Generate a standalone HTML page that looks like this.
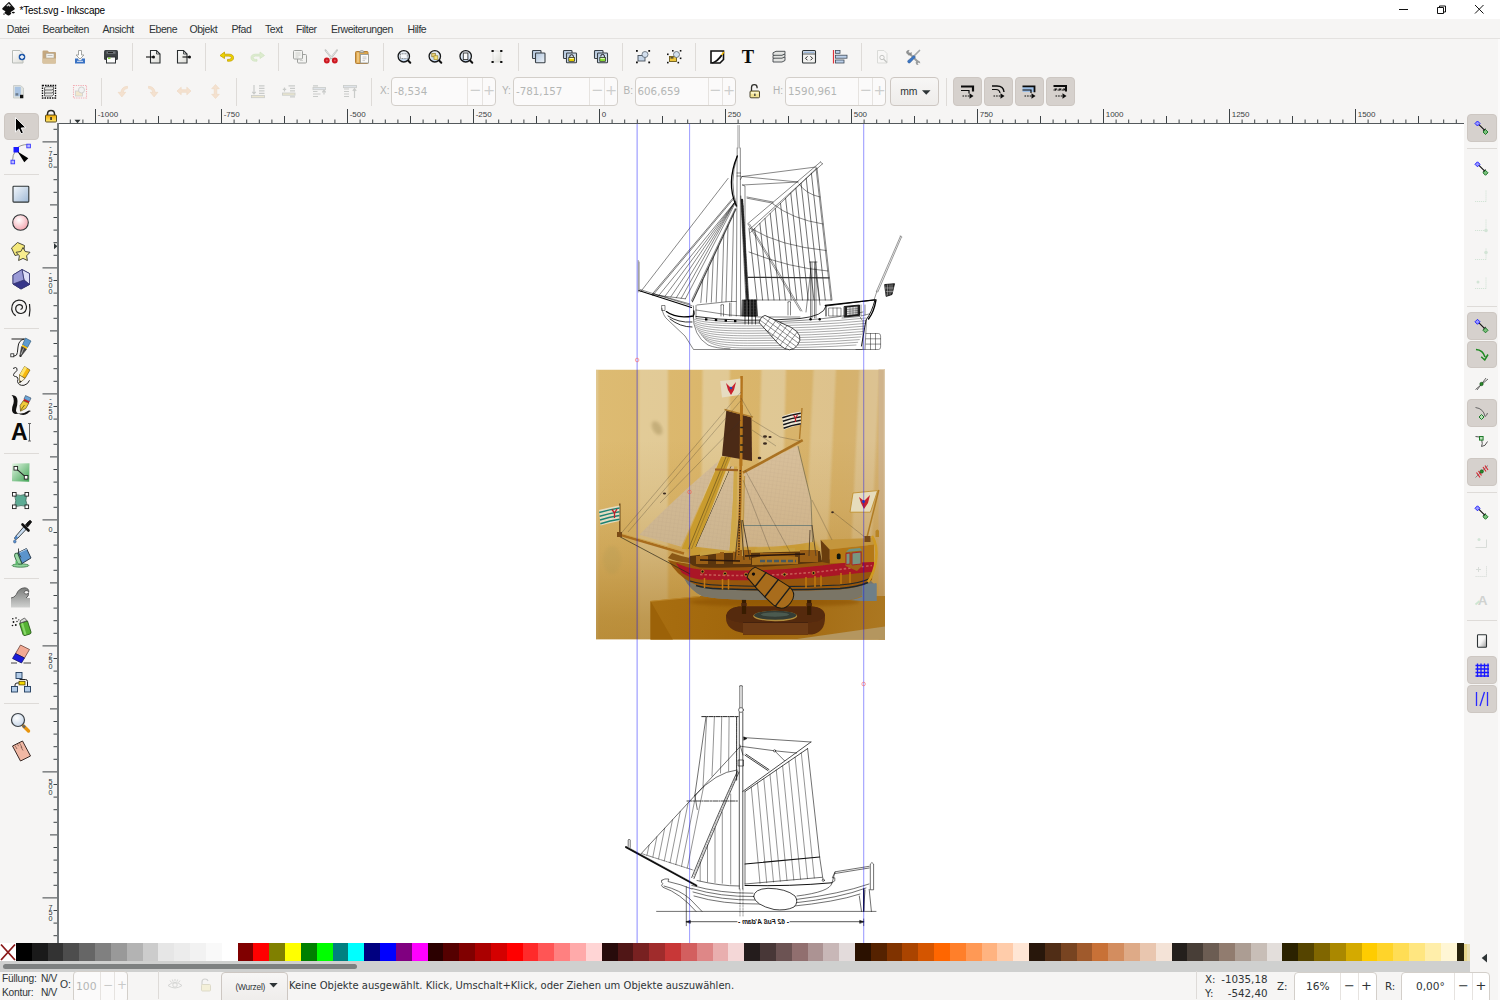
<!DOCTYPE html>
<html lang="de">
<head>
<meta charset="utf-8">
<title>*Test.svg - Inkscape</title>
<style>
html,body{margin:0;padding:0;}
body{width:1500px;height:1000px;overflow:hidden;background:#f6f5f4;position:relative;font-family:"Liberation Sans",sans-serif;color:#2e3436;}
.abs{position:absolute;}
#title{left:0;top:0;width:1500px;height:19px;background:#fff;}
#title .t{position:absolute;left:19.5px;top:3.5px;font-size:10px;line-height:13px;color:#000;white-space:nowrap;letter-spacing:-0.2px;}
#menu{left:0;top:19px;width:1500px;height:19px;background:#f6f5f4;border-bottom:1px solid #e4e2e0;}
#menu span{position:absolute;top:3.5px;font-size:10.5px;line-height:13px;color:#2e3436;white-space:nowrap;letter-spacing:-0.45px;}
.sep{position:absolute;width:1px;background:#dedbd8;}
.ic{position:absolute;width:16px;height:16px;overflow:visible;}
.tog{position:absolute;box-sizing:border-box;background:#d6d1cd;border:1px solid #cdc7c2;border-radius:4px;}
.field{position:absolute;box-sizing:border-box;border:1px solid #d3cfca;border-radius:4px;background:#fbfafa;}
.field i{position:absolute;top:0;bottom:0;width:1px;background:#e6e3e0;}
.field b{position:absolute;font-weight:normal;font-family:"DejaVu Sans",sans-serif;color:#b4b6b5;}
.lab{position:absolute;font-size:10.5px;line-height:12px;white-space:nowrap;}
.dv{font-family:"DejaVu Sans","Liberation Sans",sans-serif;}
#canvas{left:58px;top:124px;width:1406px;height:819px;background:#fff;overflow:hidden;}
</style>
</head>
<body>
<div id="title" class="abs"><span class="t">*Test.svg - Inkscape</span></div>
<div id="menu" class="abs">
<span style="left:6.8px">Datei</span><span style="left:42.5px">Bearbeiten</span><span style="left:102.5px">Ansicht</span><span style="left:149px">Ebene</span><span style="left:189.5px">Objekt</span><span style="left:231.5px">Pfad</span><span style="left:265px">Text</span><span style="left:296px">Filter</span><span style="left:331px">Erweiterungen</span><span style="left:407.5px">Hilfe</span>
</div>
<!-- toolbar separators -->
<div class="sep" style="left:132px;top:43px;height:28px"></div>
<div class="sep" style="left:205px;top:43px;height:28px"></div>
<div class="sep" style="left:278px;top:43px;height:28px"></div>
<div class="sep" style="left:383px;top:43px;height:28px"></div>
<div class="sep" style="left:518px;top:43px;height:28px"></div>
<div class="sep" style="left:622px;top:43px;height:28px"></div>
<div class="sep" style="left:695px;top:43px;height:28px"></div>
<div class="sep" style="left:861px;top:43px;height:28px"></div>
<div class="sep" style="left:101px;top:78px;height:28px"></div>
<div class="sep" style="left:236px;top:78px;height:28px"></div>
<div class="sep" style="left:371px;top:78px;height:28px"></div>
<div class="sep" style="left:946px;top:78px;height:28px"></div>
<!-- toggled buttons row 2 -->
<div class="tog" style="left:952.5px;top:77px;width:29.5px;height:28.5px"></div>
<div class="tog" style="left:983.5px;top:77px;width:29.5px;height:28.5px"></div>
<div class="tog" style="left:1014.5px;top:77px;width:29.5px;height:28.5px"></div>
<div class="tog" style="left:1045.5px;top:77px;width:29.5px;height:28.5px"></div>
<!-- numeric fields -->
<span class="lab" style="left:380px;top:85px;color:#b0b2b1;font-size:10px">X:</span>
<div class="field" style="left:390.5px;top:77px;width:105px;height:28.5px"><b style="left:2.5px;top:7px;font-size:10.3px;line-height:13px">-8,534</b><i style="left:75.5px"></i><i style="left:90px"></i><b style="left:77.5px;top:5.5px;font-size:14.5px;line-height:13px;color:#cdcecd">−</b><b style="left:91.5px;top:5.5px;font-size:14.5px;line-height:13px;color:#cdcecd">+</b></div>
<span class="lab" style="left:502px;top:85px;color:#b0b2b1;font-size:10px">Y:</span>
<div class="field" style="left:512.5px;top:77px;width:105px;height:28.5px"><b style="left:2.5px;top:7px;font-size:10.3px;line-height:13px">-781,157</b><i style="left:75.5px"></i><i style="left:90px"></i><b style="left:77.5px;top:5.5px;font-size:14.5px;line-height:13px;color:#cdcecd">−</b><b style="left:91.5px;top:5.5px;font-size:14.5px;line-height:13px;color:#cdcecd">+</b></div>
<span class="lab" style="left:623.5px;top:85px;color:#b0b2b1;font-size:10px">B:</span>
<div class="field" style="left:634.5px;top:77px;width:101px;height:28.5px"><b style="left:2px;top:7px;font-size:10.3px;line-height:13px">606,659</b><i style="left:72px"></i><i style="left:86px"></i><b style="left:73.5px;top:5.5px;font-size:14.5px;line-height:13px;color:#cdcecd">−</b><b style="left:87.5px;top:5.5px;font-size:14.5px;line-height:13px;color:#cdcecd">+</b></div>
<span class="lab" style="left:773px;top:85px;color:#b0b2b1;font-size:10px">H:</span>
<div class="field" style="left:785px;top:77px;width:101px;height:28.5px"><b style="left:2px;top:7px;font-size:10.3px;line-height:13px">1590,961</b><i style="left:72px"></i><i style="left:86px"></i><b style="left:73.5px;top:5.5px;font-size:14.5px;line-height:13px;color:#cdcecd">−</b><b style="left:87.5px;top:5.5px;font-size:14.5px;line-height:13px;color:#cdcecd">+</b></div>
<div class="field" style="left:890.2px;top:77px;width:49px;height:28.5px;background:linear-gradient(#f7f6f5,#eeecea);border-color:#cdc7c2"><b style="left:9px;top:7px;font-size:10.4px;line-height:13px;color:#2e3436;font-family:'Liberation Sans',sans-serif">mm</b></div>
<svg class="abs" style="left:0;top:0" width="1500" height="110" viewBox="0 0 1500 110">
<defs>
<linearGradient id="gpage" x1="0" y1="0" x2="1" y2="1"><stop offset="0" stop-color="#fff"/><stop offset="1" stop-color="#dcdcd6"/></linearGradient>
<linearGradient id="gblue" x1="0" y1="0" x2="1" y2="1"><stop offset="0" stop-color="#aec3dc"/><stop offset="1" stop-color="#eef3f8"/></linearGradient>
<radialGradient id="glens" cx="0.5" cy="0.7" r="0.7"><stop offset="0" stop-color="#bcd3ee"/><stop offset="1" stop-color="#f4f6f8"/></radialGradient>
</defs>
<!-- inkscape logo -->
<g transform="translate(2,2)"><path d="M6.5 0.3 L0.4 6.3 Q-0.2 7.2 0.8 7.8 L3 9 Q4 9.6 2.8 10.2 Q1.8 10.8 3 11.4 L5.6 13.3 Q6.5 13.9 7.4 13.3 L9 12 Q9.6 11.4 8.8 10.8 Q8 10 9.4 9.4 L12.2 7.8 Q13.2 7.2 12.6 6.3 L7.5 0.3 Q7 -0.1 6.5 0.3 Z" fill="#111"/><path d="M6.6 1.4 L4.2 3.9 L5.5 4.6 L6.3 3.6 L7.2 4.8 L8.3 4 L9.6 4.4 Z" fill="#fff" opacity=".85"/><ellipse cx="11.3" cy="10.6" rx="1.6" ry=".8" fill="#111"/><ellipse cx="2" cy="12" rx="1" ry=".5" fill="#111"/></g>
<!-- window controls -->
<g stroke="#111" stroke-width="1" fill="none"><path d="M1399 9.5h9"/><path d="M1437.5 7.5h6v6h-6zM1439.500 7.500v-1.500h6v6h-2"/><path d="M1475 5l8.500 8.500M1483.500 5l-8.500 8.500"/></g>

<!-- ROW 1 -->
<!-- new -->
<g><path d="M12.500 50.500h7.500l3 3v9.500h-10.500z" fill="url(#gpage)" stroke="#b9bdb8" stroke-width="1"/><circle cx="22" cy="57" r="3.300" fill="#1f57a8"/><path d="M20 57h4M22 55v4" stroke="#fff" stroke-width="1.300"/></g>
<!-- open -->
<g><path d="M42.500 51.500q0-1 1-1h4l1.500 1.500h6q1 0 1 1v9.500q0 1-1 1h-11.500q-1 0-1-1z" fill="#c4a77f"/><rect x="46" y="53.500" width="8" height="4.500" fill="#f2f2ef" stroke="#b0a692" stroke-width=".6"/><path d="M47.500 55.500h5" stroke="#aaa" stroke-width=".7"/><path d="M42.500 58.500h13.500v4q0 1-1 1h-11.500q-1 0-1-1z" fill="#d9c3a0"/></g>
<!-- save -->
<g><path d="M78.500 50.500h3v4.500h2.500l-4 4-4-4h2.500z" fill="#fff" stroke="#9a9c98" stroke-width=".9"/><path d="M75 58.500h3l.8 1.800h2.400l.8-1.800h3v5h-10z" fill="#3a73c4"/><rect x="77" y="60.800" width="6" height="1" fill="#dfe8f5"/></g>
<!-- print -->
<g><path d="M105.500 50h11q1.500 0 1.500 1.500v7q0 1.500-1.500 1.500h-11q-1.500 0-1.500-1.500v-7q0-1.500 1.500-1.500z" fill="#3e4245"/><rect x="106.500" y="51.300" width="9" height="2.500" fill="#70757a"/><path d="M108 52.500h5" stroke="#222" stroke-width="1"/><rect x="106.500" y="57" width="9" height="6" fill="#fdfdfd" stroke="#2e3234" stroke-width="1"/><rect x="108" y="57.600" width="2.500" height="1.200" fill="#73d216"/></g>
<!-- import -->
<g><path d="M150.500 50.500h6l3.500 3.500v9h-9.500z" fill="url(#gpage)" stroke="#2a2e30" stroke-width="1.100"/><path d="M156.500 50.500v3.500h3.500" fill="none" stroke="#2a2e30" stroke-width=".8"/><path d="M146 57h7" stroke="#111" stroke-width="1.100"/><circle cx="153.500" cy="57" r="1.500" fill="#111"/></g>
<!-- export -->
<g><path d="M177.500 50.500h6l3.500 3.500v9h-9.500z" fill="url(#gpage)" stroke="#2a2e30" stroke-width="1.100"/><path d="M183.500 50.500v3.500h3.500" fill="none" stroke="#2a2e30" stroke-width=".8"/><path d="M182.500 57h7" stroke="#111" stroke-width="1.100"/><circle cx="189.500" cy="57" r="1.500" fill="#111"/></g>
<!-- undo -->
<g><path d="M220 55.500l4.500-3.500v2.200h4.500q4.500 0 4.500 3.600q0 3.400-4.500 3.400h-1.500v-1.800h1.500q2.300 0 2.300-1.700q0-1.600-2.300-1.600h-4.500v2.400z" fill="#edd400" stroke="#c4a000" stroke-width=".8" stroke-linejoin="round"/></g>
<!-- redo -->
<g opacity=".55"><path d="M264.500 55.500l-4.500-3.500v2.200h-4.500q-4.500 0-4.500 3.600q0 3.400 4.500 3.400h1.500v-1.800h-1.500q-2.300 0-2.300-1.700q0-1.600 2.300-1.600h4.500v2.400z" fill="#c8e4b0" stroke="#b4d69a" stroke-width=".8" stroke-linejoin="round"/></g>
<!-- copy -->
<g fill="#f3f3f1" stroke="#9fa19e" stroke-width="1"><rect x="297.500" y="54.500" width="9" height="8.500" rx="1"/><rect x="293.500" y="50.500" width="9" height="8.500" rx="1"/><path d="M295.500 53h5M295.500 55h5M295.500 57h3M300 60.500h3" stroke="#c5c6c4" stroke-width=".8"/></g>
<!-- cut -->
<g><path d="M325.500 50.200l6.500 8.300M337 50.200l-6.500 8.300" stroke="#b9bcb8" stroke-width="1.800" stroke-linecap="round"/><path d="M325.800 50.500l6 7.500M336.700 50.500l-6 7.500" stroke="#f2f2f2" stroke-width=".7"/><circle cx="326.800" cy="60.500" r="2.900" fill="#cc1820"/><circle cx="334.800" cy="60.500" r="2.900" fill="#cc1820"/><circle cx="326.800" cy="60.500" r="1" fill="#e35a60"/><circle cx="334.800" cy="60.500" r="1" fill="#e35a60"/></g>
<!-- paste -->
<g><rect x="355.500" y="51.500" width="12.500" height="12" rx="1" fill="#dba64e" stroke="#b47f36" stroke-width="1"/><rect x="357" y="52.500" width="2" height="10" fill="#efc57c"/><path d="M359.500 52.500q0-2 2.300-2q2.300 0 2.300 2z" fill="#d3d5d1" stroke="#8a8c88" stroke-width=".7"/><rect x="360.500" y="54.500" width="8" height="8.500" fill="#fbfbfa" stroke="#9a9c98" stroke-width=".9"/><path d="M362.500 57h4M362.500 58.800h4M362.500 60.600h2.500" stroke="#bbb" stroke-width=".8"/></g>
<!-- zoom icons -->
<g><circle cx="403.800" cy="56.300" r="5.700" fill="url(#glens)" stroke="#16181a" stroke-width="1.300"/><path d="M408.300 60.800l2 2" stroke="#111" stroke-width="2" stroke-linecap="round"/><rect x="400.300" y="53.800" width="7" height="4.800" fill="#f6f8fa" stroke="#555" stroke-width=".7" stroke-dasharray="1 .6"/></g>
<g><circle cx="434.800" cy="56.300" r="5.700" fill="url(#glens)" stroke="#16181a" stroke-width="1.300"/><path d="M439.300 60.800l2 2" stroke="#111" stroke-width="2" stroke-linecap="round"/><rect x="431.800" y="53.300" width="3.500" height="3.500" fill="#e9d27c" stroke="#8a7526" stroke-width=".7"/><rect x="434" y="55.800" width="3.800" height="3.800" fill="#f7e27a" stroke="#a08a2c" stroke-width=".7"/></g>
<g><circle cx="465.700" cy="56.300" r="5.700" fill="url(#glens)" stroke="#16181a" stroke-width="1.300"/><path d="M470.300 60.800l2 2" stroke="#111" stroke-width="2" stroke-linecap="round"/><rect x="463.300" y="53" width="4.600" height="6.600" fill="#fafafa" stroke="#333" stroke-width=".9"/></g>
<g><rect x="493" y="51" width="8" height="11" fill="url(#gpage)" stroke="#d0d0cc" stroke-width=".6"/><g fill="#111"><rect x="491.500" y="50" width="2.200" height="2"/><rect x="500.200" y="50" width="2.200" height="2"/><rect x="491.500" y="61" width="2.200" height="2"/><rect x="500.200" y="61" width="2.200" height="2"/></g></g>
<!-- duplicate -->
<g fill="url(#gblue)" stroke="#394047" stroke-width="1.100"><rect x="532.500" y="50.500" width="8.500" height="8" rx=".8"/><rect x="535.500" y="53" width="9.500" height="9.800" rx=".8"/></g>
<!-- clone -->
<g><g fill="url(#gblue)" stroke="#394047" stroke-width="1.100"><rect x="563.500" y="50.500" width="8.500" height="8" rx=".8"/><rect x="566.500" y="53" width="10" height="9.800" rx=".8"/></g><path d="M569.800 57.500v-1.200q0-1.600 1.800-1.600q1.800 0 1.800 1.600v1.200" fill="none" stroke="#222" stroke-width="1"/><rect x="568.800" y="57.500" width="5.600" height="3.800" fill="#edd400" stroke="#222" stroke-width=".7"/><rect x="569.500" y="58" width="4.200" height="1" fill="#fff6a8"/></g>
<!-- unlink clone -->
<g><g fill="url(#gblue)" stroke="#394047" stroke-width="1.100"><rect x="594.500" y="50.500" width="8.500" height="8" rx=".8"/><rect x="597.500" y="53" width="10" height="9.800" rx=".8"/></g><path d="M600.800 56.500v-.5q0-1.600 1.800-1.600q1.800 0 1.800 1.600v1.500" fill="none" stroke="#222" stroke-width="1"/><rect x="599.800" y="57.500" width="5.600" height="3.800" fill="#8ae234" stroke="#222" stroke-width=".7"/><rect x="600.500" y="58" width="4.200" height="1" fill="#d9f7b0"/></g>
<!-- group -->
<g><rect x="638" y="55.500" width="7" height="5.500" fill="#c5d5e8" stroke="#47505a" stroke-width=".9"/><circle cx="645" cy="54.500" r="3" fill="#d3e0ef" stroke="#5a6470" stroke-width=".8"/><g fill="#111"><rect x="636" y="50" width="1.800" height="1.800"/><rect x="648.300" y="50" width="1.800" height="1.800"/><rect x="636" y="61.500" width="1.800" height="1.800"/><rect x="648.300" y="61.500" width="1.800" height="1.800"/></g></g>
<!-- ungroup -->
<g><rect x="669.500" y="56.500" width="7" height="5" fill="#edc63c" stroke="#6a5a1a" stroke-width=".9"/><rect x="670.500" y="57.200" width="3" height="1.300" fill="#333"/><circle cx="676.500" cy="54.500" r="3" fill="#d3e0ef" stroke="#5a6470" stroke-width=".8"/><g fill="#111"><rect x="667" y="53.500" width="1.600" height="1.600"/><rect x="667" y="61.800" width="1.600" height="1.600"/><rect x="677.500" y="61.800" width="1.600" height="1.600"/><rect x="672" y="50" width="1.600" height="1.600"/><rect x="679.800" y="50" width="1.600" height="1.600"/><rect x="679.800" y="57.500" width="1.600" height="1.600"/></g></g>
<!-- fill & stroke -->
<g><path d="M711 51h12.500v8.500l-3.500 3.500h-9z" fill="#fff" stroke="#111" stroke-width="1.600"/><path d="M711.500 62.500q5-1.500 9.500-8l1.500 1q-4 6.500-10 8z" fill="#111"/><path d="M721 54.500l2.500-3l1 .8l-2 3z" fill="#f5b800"/></g>
<!-- T -->
<text x="747.800" y="63" font-family="Liberation Serif, serif" font-weight="bold" font-size="18.500" text-anchor="middle" fill="#0a0a0a">T</text>
<!-- layers -->
<g fill="#e3e4e2" stroke="#41464a" stroke-width=".9" stroke-linejoin="round"><path d="M773 58.500l3-1.500h9v3.500l-3 1.500h-9z"/><path d="M773 55.700l3-1.500h9v2.500l-3 1.500h-9z"/><path d="M773 52.800l3-1.500h9v2.500l-3 1.500h-9z"/></g>
<!-- xml editor -->
<g><rect x="802.500" y="50.500" width="13" height="12.500" rx="1" fill="#f4f4f2" stroke="#2e3436" stroke-width="1.100"/><rect x="803.500" y="51.500" width="11" height="1.600" fill="#9db8da"/><path d="M803 54h12" stroke="#2e3436" stroke-width=".8"/><path d="M807.500 56.300l-2 2l2 2M810.500 56.300l2 2l-2 2" fill="none" stroke="#222" stroke-width="1"/></g>
<!-- align -->
<g><path d="M833.500 50v13.500" stroke="#e0343c" stroke-width="1.200"/><g fill="#bcd0ea" stroke="#3e4a58" stroke-width=".8"><rect x="835.500" y="50.500" width="4.500" height="2.800"/><rect x="835.500" y="55.200" width="11.500" height="3"/><rect x="835.500" y="60" width="8.500" height="3"/></g></g>
<!-- doc props faded -->
<g opacity=".45"><path d="M877.500 50.500h6.500l3 3v9.500h-9.500z" fill="#fbfbfa" stroke="#b9bdb8" stroke-width="1"/><circle cx="882" cy="57.500" r="2.200" fill="none" stroke="#8a8c88" stroke-width="1"/><path d="M883.500 59l3.500 3.500" stroke="#8a8c88" stroke-width="1.300"/></g>
<!-- prefs -->
<g><path d="M909.500 53.500l8 8" stroke="#9a9d9e" stroke-width="2" stroke-linecap="round"/><path d="M906.500 53.200q-.6-2.800 2.700-3l-1 1.800l1.500 1.500l1.800-1q.2 3.200-3 2.700" fill="#8f9293" stroke="#777" stroke-width=".4"/><path d="M917 60.500q3.500 0 3.200 3l-1.600-1l-1 1l1 1.500q-2.800.5-3-2.500" fill="#9a9d9e"/><path d="M919.500 50.500l-5.500 5.500" stroke="#a5a8a9" stroke-width="1.700" stroke-linecap="round"/><path d="M914 55.500l1.500 1.500l-5.200 5.600q-1.200 1-2.200 0t0-2.200z" fill="#3b76c4" stroke="#24508c" stroke-width=".5"/></g>

<!-- ROW 2 -->
<!-- select all -->
<g><path d="M13.500 85.500h7l3 2.500v10h-10z" fill="#dfe3e0" stroke="#c4c8c4" stroke-width=".8"/><rect x="14.800" y="86.800" width="6" height="9.500" fill="#a9c3e2"/><rect x="15.500" y="93.200" width="2.800" height="2.400" fill="#6d7c8c"/><rect x="20" y="94.800" width="3.200" height="3.400" fill="#111"/></g>
<!-- select all layers -->
<g><rect x="42.500" y="85.500" width="13" height="12.500" fill="#fff" stroke="#111" stroke-width="1.400" stroke-dasharray="1.600 .9"/><g fill="#e8e8e6" stroke="#333" stroke-width=".7"><path d="M44.500 93.500l1.500-1h7.500v2.500l-1.500 1h-7.500z"/><path d="M44.500 90.500l1.500-1h7.500v2.500l-1.500 1h-7.500z"/><path d="M44.500 87.700l1.500-1h7.500v2.300l-1.500 1h-7.500z"/></g></g>
<!-- deselect -->
<g opacity=".5"><rect x="73.500" y="85.500" width="13" height="12.500" fill="none" stroke="#ef6a78" stroke-width="1.100" stroke-dasharray="1.300 1"/><rect x="75.500" y="91" width="7" height="5" fill="#f0dca8" stroke="#aaa" stroke-width=".8"/><circle cx="81.500" cy="90" r="3" fill="#eef0f2" stroke="#999" stroke-width=".8"/></g>
<!-- rotate ccw / cw / flips faded -->
<g fill="#f4e1cf" stroke="#efd6bf" stroke-width=".6" stroke-linejoin="round">
<path d="M127.500 86.300q-6 .3-6.600 6h-2.800l3.800 4.600l3.800-4.600h-2.600q.5-3.500 4.400-4z"/>
<path d="M148.500 86.300q6 .3 6.600 6h2.800l-3.800 4.600l-3.800-4.600h2.600q-.5-3.500-4.400-4z"/>
<path d="M177 91l4.200-3.800v2.500h5.600v-2.500l4.200 3.800l-4.200 3.800v-2.500h-5.600v2.500z"/>
<path d="M215.500 84.500l3.800 4.200h-2.500v5.600h2.500l-3.800 4.200l-3.800-4.200h2.500v-5.600h-2.500z"/>
</g>
<!-- lower/raise faded -->
<g stroke="#c9cbc9" stroke-width="1.200" fill="none">
<path d="M259 85.800h5.500M259 88.300h5.500M259 90.800h5.500M259 93.300h5.500M254 85v8.500M252.300 91.800l1.700 2l1.700-2"/>
<path d="M288.500 85.800h6.500M290 88.300h5M290 90.800h5M290 96.800h5M284.500 87.500v4M282.800 89.300h3.400"/>
<path d="M313 85.800h5M313 91.500h4.500M313 94h7.500M313 96.500h5M324 90.500v4M322.300 92.300l1.700-2l1.700 2"/>
<path d="M344 89h5M344 91.500h5M344 94h5M344 96.500h5M354.500 89v9M352.800 90.800l1.700-2l1.700 2"/>
</g>
<g fill="#ece6cf" stroke="#c9cbc9" stroke-width=".8"><rect x="251.500" y="95.500" width="13" height="2.200"/><rect x="282.500" y="93" width="12.500" height="2.200"/></g>
<g fill="#dfe3e8" stroke="#c9cbc9" stroke-width=".8"><rect x="313" y="87.500" width="12.500" height="2.200"/><rect x="343.500" y="85.500" width="13" height="2.200"/></g>
<!-- lock -->
<g><path d="M751.500 91.500v-4q0-2.800 2.800-2.800q2.800 0 2.800 2.800v.8" fill="none" stroke="#2e2e2a" stroke-width="1.300"/><rect x="750" y="91" width="9.500" height="6.800" rx="1" fill="#f1e292" stroke="#3a3620" stroke-width=".9"/><rect x="751" y="92" width="7.500" height="1.800" fill="#fbf5c8"/><rect x="754.200" y="93.600" width="1.300" height="2.400" fill="#333"/></g>
<!-- mm arrow -->
<path d="M922 90.300h8.500l-4.250 4.400z" fill="#2e3436"/>
<!-- snap-bbox toggles row2 -->
<g stroke="#0c0c0c" fill="none">
<path d="M961 86.500h12v5" stroke-width="2.200"/><path d="M961 90.500h8v3" stroke-width="1.200"/><path d="M962.500 96h8" stroke-width="1.200" stroke-dasharray="1.600 1"/><path d="M969.500 93.300l4 2.700l-4 2.700z" fill="#0c0c0c" stroke="none"/>
<path d="M992 86h5q6.500 0 7 6" stroke-width="1.400"/><path d="M992 89.500h4q3.500 0 4 3.500" stroke-width="1.200"/><path d="M993.500 96h8" stroke-width="1.200" stroke-dasharray="1.600 1"/><path d="M1000.500 93.300l4 2.700l-4 2.700z" fill="#0c0c0c" stroke="none"/>
<rect x="1022.500" y="86.500" width="11.500" height="5.500" fill="#9dbfe6" stroke="none"/><path d="M1022.500 86.300h12v6" stroke-width="1.800"/><path d="M1022.500 90h8.500v3" stroke-width="1.200"/><path d="M1024.500 96h8" stroke-width="1.200" stroke-dasharray="1.600 1"/><path d="M1031.500 93.300l4 2.700l-4 2.700z" fill="#0c0c0c" stroke="none"/>
<path d="M1053.500 86h12.500v5.500" stroke-width="2"/><path d="M1053.500 90h12" stroke-width="1.200" stroke-dasharray="2.600 1.400"/><path d="M1055.500 96h8" stroke-width="1.200" stroke-dasharray="1.600 1"/><path d="M1062.500 93.300l4 2.700l-4 2.700z" fill="#0c0c0c" stroke="none"/>
</g>
<g fill="#0c0c0c"><path d="M1054.300 88.500h3l-1.500 2.300zM1058.600 88.500h3l-1.500 2.300zM1062.900 88.500h3l-1.500 2.300z"/></g>
</svg>
<svg class="abs" style="left:0;top:0" width="1500" height="1000" viewBox="0 0 1500 1000"><g stroke="#3d4346" stroke-width="1" fill="none"><path d="M70.3 119.5V123.5"/><path d="M82.9 119.5V123.5"/><path d="M95.5 109V123.5"/><path d="M108.1 119.5V123.5"/><path d="M120.7 119.5V123.5"/><path d="M133.3 119.5V123.5"/><path d="M145.9 119.5V123.5"/><path d="M158.5 116V123.5"/><path d="M171.1 119.5V123.5"/><path d="M183.7 119.5V123.5"/><path d="M196.3 119.5V123.5"/><path d="M208.9 119.5V123.5"/><path d="M221.5 109V123.5"/><path d="M234.1 119.5V123.5"/><path d="M246.7 119.5V123.5"/><path d="M259.3 119.5V123.5"/><path d="M271.9 119.5V123.5"/><path d="M284.5 116V123.5"/><path d="M297.1 119.5V123.5"/><path d="M309.7 119.5V123.5"/><path d="M322.3 119.5V123.5"/><path d="M334.9 119.5V123.5"/><path d="M347.5 109V123.5"/><path d="M360.1 119.5V123.5"/><path d="M372.7 119.5V123.5"/><path d="M385.3 119.5V123.5"/><path d="M397.9 119.5V123.5"/><path d="M410.5 116V123.5"/><path d="M423.1 119.5V123.5"/><path d="M435.7 119.5V123.5"/><path d="M448.3 119.5V123.5"/><path d="M460.9 119.5V123.5"/><path d="M473.5 109V123.5"/><path d="M486.1 119.5V123.5"/><path d="M498.7 119.5V123.5"/><path d="M511.3 119.5V123.5"/><path d="M523.9 119.5V123.5"/><path d="M536.5 116V123.5"/><path d="M549.1 119.5V123.5"/><path d="M561.7 119.5V123.5"/><path d="M574.3 119.5V123.5"/><path d="M586.9 119.5V123.5"/><path d="M599.5 109V123.5"/><path d="M612.1 119.5V123.5"/><path d="M624.7 119.5V123.5"/><path d="M637.3 119.5V123.5"/><path d="M649.9 119.5V123.5"/><path d="M662.5 116V123.5"/><path d="M675.1 119.5V123.5"/><path d="M687.7 119.5V123.5"/><path d="M700.3 119.5V123.5"/><path d="M712.9 119.5V123.5"/><path d="M725.5 109V123.5"/><path d="M738.1 119.5V123.5"/><path d="M750.7 119.5V123.5"/><path d="M763.3 119.5V123.5"/><path d="M775.9 119.5V123.5"/><path d="M788.5 116V123.5"/><path d="M801.1 119.5V123.5"/><path d="M813.7 119.5V123.5"/><path d="M826.3 119.5V123.5"/><path d="M838.9 119.5V123.5"/><path d="M851.5 109V123.5"/><path d="M864.1 119.5V123.5"/><path d="M876.7 119.5V123.5"/><path d="M889.3 119.5V123.5"/><path d="M901.9 119.5V123.5"/><path d="M914.5 116V123.5"/><path d="M927.1 119.5V123.5"/><path d="M939.7 119.5V123.5"/><path d="M952.3 119.5V123.5"/><path d="M964.9 119.5V123.5"/><path d="M977.5 109V123.5"/><path d="M990.1 119.5V123.5"/><path d="M1002.7 119.5V123.5"/><path d="M1015.3 119.5V123.5"/><path d="M1027.9 119.5V123.5"/><path d="M1040.5 116V123.5"/><path d="M1053.1 119.5V123.5"/><path d="M1065.7 119.5V123.5"/><path d="M1078.3 119.5V123.5"/><path d="M1090.9 119.5V123.5"/><path d="M1103.5 109V123.5"/><path d="M1116.1 119.5V123.5"/><path d="M1128.7 119.5V123.5"/><path d="M1141.3 119.5V123.5"/><path d="M1153.9 119.5V123.5"/><path d="M1166.5 116V123.5"/><path d="M1179.1 119.5V123.5"/><path d="M1191.7 119.5V123.5"/><path d="M1204.3 119.5V123.5"/><path d="M1216.9 119.5V123.5"/><path d="M1229.5 109V123.5"/><path d="M1242.1 119.5V123.5"/><path d="M1254.7 119.5V123.5"/><path d="M1267.3 119.5V123.5"/><path d="M1279.9 119.5V123.5"/><path d="M1292.5 116V123.5"/><path d="M1305.1 119.5V123.5"/><path d="M1317.7 119.5V123.5"/><path d="M1330.3 119.5V123.5"/><path d="M1342.9 119.5V123.5"/><path d="M1355.5 109V123.5"/><path d="M1368.1 119.5V123.5"/><path d="M1380.7 119.5V123.5"/><path d="M1393.3 119.5V123.5"/><path d="M1405.9 119.5V123.5"/><path d="M1418.5 116V123.5"/><path d="M1431.1 119.5V123.5"/><path d="M1443.7 119.5V123.5"/><path d="M1456.3 119.5V123.5"/></g><g font-family="Liberation Sans, sans-serif" font-size="8" fill="#3a4043"><text x="97.7" y="117.2">-1000</text><text x="223.7" y="117.2">-750</text><text x="349.7" y="117.2">-500</text><text x="475.7" y="117.2">-250</text><text x="601.7" y="117.2">0</text><text x="727.7" y="117.2">250</text><text x="853.7" y="117.2">500</text><text x="979.7" y="117.2">750</text><text x="1105.7" y="117.2">1000</text><text x="1231.7" y="117.2">1250</text><text x="1357.7" y="117.2">1500</text></g><g stroke="#3d4346" stroke-width="1" fill="none"><path d="M53.5 129.3H57.5"/><path d="M42.5 141.9H57.5"/><path d="M53.5 154.5H57.5"/><path d="M53.5 167.1H57.5"/><path d="M53.5 179.7H57.5"/><path d="M53.5 192.3H57.5"/><path d="M50 204.9H57.5"/><path d="M53.5 217.5H57.5"/><path d="M53.5 230.1H57.5"/><path d="M53.5 242.7H57.5"/><path d="M53.5 255.3H57.5"/><path d="M42.5 267.9H57.5"/><path d="M53.5 280.5H57.5"/><path d="M53.5 293.1H57.5"/><path d="M53.5 305.7H57.5"/><path d="M53.5 318.3H57.5"/><path d="M50 330.9H57.5"/><path d="M53.5 343.5H57.5"/><path d="M53.5 356.1H57.5"/><path d="M53.5 368.7H57.5"/><path d="M53.5 381.3H57.5"/><path d="M42.5 393.9H57.5"/><path d="M53.5 406.5H57.5"/><path d="M53.5 419.1H57.5"/><path d="M53.5 431.7H57.5"/><path d="M53.5 444.3H57.5"/><path d="M50 456.9H57.5"/><path d="M53.5 469.5H57.5"/><path d="M53.5 482.1H57.5"/><path d="M53.5 494.7H57.5"/><path d="M53.5 507.3H57.5"/><path d="M42.5 519.9H57.5"/><path d="M53.5 532.5H57.5"/><path d="M53.5 545.1H57.5"/><path d="M53.5 557.7H57.5"/><path d="M53.5 570.3H57.5"/><path d="M50 582.9H57.5"/><path d="M53.5 595.5H57.5"/><path d="M53.5 608.1H57.5"/><path d="M53.5 620.7H57.5"/><path d="M53.5 633.3H57.5"/><path d="M42.5 645.9H57.5"/><path d="M53.5 658.5H57.5"/><path d="M53.5 671.1H57.5"/><path d="M53.5 683.7H57.5"/><path d="M53.5 696.3H57.5"/><path d="M50 708.9H57.5"/><path d="M53.5 721.5H57.5"/><path d="M53.5 734.1H57.5"/><path d="M53.5 746.7H57.5"/><path d="M53.5 759.3H57.5"/><path d="M42.5 771.9H57.5"/><path d="M53.5 784.5H57.5"/><path d="M53.5 797.1H57.5"/><path d="M53.5 809.7H57.5"/><path d="M53.5 822.3H57.5"/><path d="M50 834.9H57.5"/><path d="M53.5 847.5H57.5"/><path d="M53.5 860.1H57.5"/><path d="M53.5 872.7H57.5"/><path d="M53.5 885.3H57.5"/><path d="M42.5 897.9H57.5"/><path d="M53.5 910.5H57.5"/><path d="M53.5 923.1H57.5"/><path d="M53.5 935.7H57.5"/></g><g font-family="Liberation Sans, sans-serif" font-size="7.2" fill="#2e3436" text-anchor="middle"><text x="50.5" y="148.9">-</text><text x="50.5" y="155.9">7</text><text x="50.5" y="161.7">5</text><text x="50.5" y="167.5">0</text><text x="50.5" y="274.9">-</text><text x="50.5" y="281.9">5</text><text x="50.5" y="287.7">0</text><text x="50.5" y="293.5">0</text><text x="50.5" y="400.9">-</text><text x="50.5" y="407.9">2</text><text x="50.5" y="413.7">5</text><text x="50.5" y="419.5">0</text><text x="50.5" y="531.6">0</text><text x="50.5" y="657.6">2</text><text x="50.5" y="663.4">5</text><text x="50.5" y="669.2">0</text><text x="50.5" y="783.6">5</text><text x="50.5" y="789.4">0</text><text x="50.5" y="795.2">0</text><text x="50.5" y="909.6">7</text><text x="50.5" y="915.4">5</text><text x="50.5" y="921.2">0</text></g><path d="M74.500 119.800h6l-3 3.400z" fill="#2e3436"/><path d="M54 243.300v6l3.400-3z" fill="#2e3436"/></svg>
<div class="tog" style="left:3.5px;top:112.5px;width:35px;height:27px;border-radius:4px"></div>
<div class="sep" style="left:3.5px;top:174px;width:35px;height:1px"></div>
<div class="sep" style="left:3.5px;top:327.500px;width:35px;height:1px"></div>
<div class="sep" style="left:3.5px;top:453px;width:35px;height:1px"></div>
<div class="sep" style="left:3.5px;top:577.500px;width:35px;height:1px"></div>
<div class="sep" style="left:3.5px;top:702.500px;width:35px;height:1px"></div>
<svg class="abs" style="left:0;top:100px" width="60" height="680" viewBox="0 100 60 680">
<defs>
<linearGradient id="lrect" x1="0" y1="0" x2="1" y2="1"><stop offset="0" stop-color="#f4f8fc"/><stop offset="1" stop-color="#9fb9d6"/></linearGradient>
<radialGradient id="lell" cx=".4" cy=".35" r=".7"><stop offset="0" stop-color="#fff"/><stop offset="1" stop-color="#f5a3ad"/></radialGradient>
<linearGradient id="lgrad" x1="0" y1="0" x2="1" y2="1"><stop offset="0" stop-color="#e2f5e2"/><stop offset="1" stop-color="#3fa354"/></linearGradient>
<linearGradient id="llock" x1="0" y1="0" x2="0" y2="1"><stop offset="0" stop-color="#f0a800"/><stop offset="1" stop-color="#ffe873"/></linearGradient>
<linearGradient id="lwave" x1="0" y1="0" x2="0" y2="1"><stop offset="0" stop-color="#7a7c7a"/><stop offset="1" stop-color="#d0d1d0"/></linearGradient>
<radialGradient id="lzoom" cx=".4" cy=".35" r=".7"><stop offset="0" stop-color="#fff"/><stop offset="1" stop-color="#c3d3e6"/></radialGradient>
</defs>
<!-- ruler corner lock -->
<g><path d="M47.500 115.500v-1.500q0-3.500 3.500-3.500q3.500 0 3.500 3.500v1.500" fill="none" stroke="#2a2a26" stroke-width="1.500"/><rect x="45.500" y="115" width="11" height="7" rx="1" fill="url(#llock)" stroke="#4a3d10" stroke-width=".9"/><rect x="50.300" y="117" width="1.500" height="3" fill="#222"/></g>
<!-- selector arrow -->
<path d="M15.500 117.500v14.500l3.300-3l2.200 4.800l2.400-1.100l-2.200-4.700l4.600-.3z" fill="#000" stroke="#fff" stroke-width=".9" stroke-linejoin="round"/>
<!-- node tool -->
<g><path d="M16 149q4-4.500 12-4.500M15.500 151q-3 3.500-3 10" fill="none" stroke="#8a8c88" stroke-width=".9"/><rect x="13.500" y="147" width="5.500" height="5.500" fill="#1a1aff"/><rect x="26.800" y="144.200" width="3.600" height="3.600" fill="#b8b8ff" stroke="#3a3aff" stroke-width=".9"/><rect x="11" y="160.200" width="3.600" height="3.600" fill="#b8b8ff" stroke="#3a3aff" stroke-width=".9"/><path d="M17.500 151.500l10.800 6.800l-4 4z" fill="#000"/></g>
<!-- rect -->
<rect x="13" y="186.300" width="15.800" height="15.800" rx=".8" fill="url(#lrect)" stroke="#2e3436" stroke-width="1.100"/>
<!-- ellipse -->
<circle cx="20.500" cy="222.500" r="7.800" fill="url(#lell)" stroke="#2e3436" stroke-width="1.100"/>
<!-- star -->
<g fill="#f4e87c" stroke="#3a3a30" stroke-width=".9" stroke-linejoin="round"><path d="M11.500 248l6-5.500l7 3l-1 8l-8.500 2z"/><path d="M23 247.500l2.200 4l4.800.8l-3.400 3.500l.8 4.700l-4.400-2.100l-4.400 2.100l.8-4.700l-3.400-3.500l4.800-.8z" fill="#f9ee8e"/></g>
<!-- 3d box -->
<g stroke="#34346e" stroke-width=".8" stroke-linejoin="round"><path d="M13 275l9-5.500l7.500 4v11l-8.500 4.500l-8-5z" fill="#9c9cd4"/><path d="M22 269.500l7.500 4v11l-5.500-4.500z" fill="#dedef8"/><path d="M13 284l11-4l5.500 4.500l-8.500 4.500z" fill="#36368a"/><path d="M13 275l9-5.500l2 10.500l-11 4z" fill="#9a9ad6"/></g>
<!-- spiral -->
<path d="M20.500 309.500q2-.5 2-2.500q-.5-2.500-3.500-2.300q-3.500.8-3.300 4.500q.7 4.500 5.500 4.300q5.500-1 5.300-7q-1-6.500-7.800-6.300q-7 1-7 9q.5 4 4 6.500M29.500 304q1 5-.3 12.500" fill="none" stroke="#1e1e1e" stroke-width="1.200"/>
<!-- bezier pen -->
<g><path d="M11.500 339h13q-6 1-6.500 8t-1.500 8q-1 1-3.500 1" fill="none" stroke="#222" stroke-width="1"/><rect x="10.800" y="353.800" width="3" height="3" fill="#fff" stroke="#222" stroke-width=".8"/><circle cx="20.500" cy="356" r="1.100" fill="#222"/><path d="M25.500 338l5.500 3l-3.500 6.500l-5-2.800z" fill="#5d9bd0" stroke="#27506e" stroke-width=".6"/><path d="M22.500 344.700l5 2.800l-1 1.800l-5-2.700z" fill="#f5c211"/><path d="M21.500 346.600l5 2.700l-5.500 7l-1.200-.6z" fill="#444" stroke="#222" stroke-width=".5"/><path d="M23.500 348.500l-2.500 6" stroke="#ddd" stroke-width=".7"/></g>
<!-- pencil -->
<g><path d="M13 368.500q3-2 4 0t-2.500 4.500q-2.500 3 1 3.500t2 5q1 4.500 6.500 3.800q4-1 5.500-5" fill="none" stroke="#222" stroke-width="1"/><path d="M24.500 366.500l5.500 3.500l-5 8.500l-5.500-3.500z" fill="#f7b80c" stroke="#5a4a10" stroke-width=".6"/><path d="M24.500 366.500l2.500 1.600l-5 8.600l-2.500-1.700z" fill="#fde46c"/><path d="M19.500 375l5.500 3.500l-5.500 4.500z" fill="#fbf3d8" stroke="#5a4a10" stroke-width=".6"/><path d="M19.500 383l.6-2.600l1.800 1z" fill="#222"/></g>
<!-- calligraphy -->
<g><path d="M11.500 395q6 0 6 6q0 4.500-1.300 8q-1 4 2.800 4.300q-6 2.500-7-3q-.2-3 1.500-7q1-5.500-2-8.300z" fill="#111"/><path d="M17 413q6 1.500 10-1.500q2-1.500 4-.5q-2 .5-3.500 2.500q-4 3-10.500-.5z" fill="#111"/><path d="M25.500 395.500l5.500 2.500l-1.500 3.500l-5.500-2.500z" fill="#6aa4d8" stroke="#234" stroke-width=".5"/><path d="M24 399l5.500 2.500l-.7 1.700l-5.600-2.400z" fill="#cc1820"/><path d="M23.200 400.800l5.600 2.400l-3 5.300l-5.300 2.700l-.5-5.700z" fill="#f2cc3a" stroke="#4a3a10" stroke-width=".6"/><path d="M24.500 405l-4 5.500" stroke="#4a3a10" stroke-width=".7"/></g>
<!-- text tool -->
<text x="11" y="440.300" font-family="Liberation Sans, sans-serif" font-weight="bold" font-size="23" fill="#0a0a0a">A</text>
<path d="M28 423.500h3M29.500 423.500v17.500M28 441h3" stroke="#555" stroke-width=".9" fill="none"/>
<!-- gradient -->
<g><path d="M12.200 463.500l17.300-.3l-.3 18.500l-17.200-.5z" fill="url(#lgrad)"/><path d="M15.800 468.300l10.300 9" stroke="#222" stroke-width="1.100"/><rect x="14" y="466.500" width="3.600" height="3.600" fill="#fff" stroke="#222" stroke-width=".9"/><rect x="24.300" y="475.500" width="3.600" height="3.600" fill="#fff" stroke="#222" stroke-width=".9"/></g>
<!-- mesh -->
<g><path d="M14.500 494.500q6 2 12.500-.5q-2.500 6.500.5 12.500q-6.500-2-13 .3q2.500-6 0-12.300z" fill="#5dab94" stroke="#2a5a4a" stroke-width=".7"/><g fill="#fff" stroke="#222" stroke-width=".9"><rect x="12.500" y="492.500" width="3.600" height="3.600"/><rect x="25" y="492.500" width="3.600" height="3.600"/><rect x="12.500" y="505" width="3.600" height="3.600"/><rect x="25" y="505" width="3.600" height="3.600"/></g></g>
<!-- dropper -->
<g><path d="M24 526.500l2.500 2.500l-9 9.500q-1.500 1.500-2.500.5t.5-2.500z" fill="#c9dcf0" stroke="#2e3436" stroke-width=".9"/><path d="M16 535.500l2 2l-2.200 2l-1.300-1.300z" fill="#4a82c4"/><path d="M22.500 524.500l6 6" stroke="#111" stroke-width="2.600" stroke-linecap="round"/><path d="M25.500 525l3-3.500q1.500-1.500 2.500-.5t-.5 2.500l-3 3.500z" fill="#111" stroke="#111" stroke-width="1"/><ellipse cx="14.800" cy="541.500" rx="1.300" ry="1.600" fill="#5a90d0" stroke="#2a4a70" stroke-width=".5"/></g>
<!-- bucket -->
<g><ellipse cx="20.500" cy="565.500" rx="8.300" ry="1.700" fill="#8fd49a" stroke="#2a6a3a" stroke-width=".7"/><path d="M17.500 553l9-4.500l4.500 9.500l-9 5.500z" fill="#5b94cc" stroke="#1e2e3e" stroke-width=".9"/><path d="M14.500 556q-.5-3.500 3-3l4.500 11q-4 1-5-1.500z" fill="#9ad8a4" stroke="#1e4e2e" stroke-width=".8"/><path d="M16.500 561v4" stroke="#5aba6a" stroke-width="2"/><path d="M18.500 548.500v4.500l2.500 4.500" fill="none" stroke="#2e3436" stroke-width=".9"/><path d="M19.500 552.500l7.500-3.500" stroke="#cfe2f4" stroke-width=".8"/></g>
<!-- tweak -->
<g><path d="M11 607.500v-9.500q3.500-.2 5.300-3.500q2.500-6.500 8.500-6.700q4.200.5 4 4.200q-1.500-2.300-3.800-1.200q-1.800 1.700.2 3.200q2.300.8 3.300-1.300q.5 3.800-2.500 5.300h4v9.500z" fill="url(#lwave)"/><path d="M11 598q3.500-.2 5.300-3.500q2.500-6.500 8.500-6.700q4.200.5 4 4.200q-1.500-2.300-3.800-1.200q-1.800 1.700.2 3.200q2.300.8 3.300-1.300q.5 3.800-2.500 5.300" fill="none" stroke="#555" stroke-width=".9"/></g>
<!-- spray -->
<g><path d="M19.500 623.500l8-2.500l3.500 11q.3 1.500-1 2l-5 1.500q-1.500.3-2-1z" fill="#55b233" stroke="#1e4e10" stroke-width=".8"/><path d="M21 623.500l2-.7l3.500 11.700l-2 .6z" fill="#8ad86a"/><path d="M20.500 620.500l4-2.500l2.500 2.700l-7 2.500z" fill="#d8dad6" stroke="#333" stroke-width=".7"/><g fill="#111"><circle cx="12.800" cy="618.800" r=".8"/><circle cx="16" cy="618" r=".8"/><circle cx="13.500" cy="622" r=".9"/><circle cx="17" cy="621.500" r=".7"/><circle cx="12.500" cy="625.500" r=".8"/><circle cx="15.800" cy="625" r=".9"/><circle cx="18.800" cy="619.800" r=".6"/></g></g>
<!-- eraser -->
<g><path d="M20.500 645l9 4.500l-5 8.500l-9-4.500z" fill="#f2aa94" stroke="#5a3028" stroke-width=".7"/><path d="M15.500 653.500l9 4.500l-3 5l-9-4.500z" fill="#1c1cd8" stroke="#0a0a60" stroke-width=".7"/><path d="M11 663h6M23.500 663h7.500" stroke="#444" stroke-width="1.200"/></g>
<!-- connector -->
<g><path d="M19.500 679.500h6q2 0 2 2v5M19.500 681v2.500M15 687v-2q0-2 2-2h5" fill="none" stroke="#222" stroke-width="1"/><g fill="#b3cce8" stroke="#1e3a5c" stroke-width=".9"><rect x="16" y="672.500" width="6" height="6"/><rect x="11.500" y="686.500" width="6" height="5.500"/><rect x="24.500" y="686.500" width="6" height="5.500"/></g><rect x="19" y="681.300" width="6" height="3.600" fill="#f5d800" stroke="#5a4a00" stroke-width=".8"/></g>
<!-- zoom -->
<g><path d="M23.500 726l5 5" stroke="#e8940c" stroke-width="3.400" stroke-linecap="round"/><path d="M23 725.500l2 2" stroke="#666" stroke-width="2.500"/><circle cx="18" cy="720" r="6.500" fill="url(#lzoom)" stroke="#3a3f44" stroke-width="1.200"/></g>
<!-- measure -->
<g><path d="M12.500 746l10-5l8 15l-10 5z" fill="#f1b8a4" stroke="#3a2a26" stroke-width="1"/><path d="M15 745.500l2 3.500M17.500 744.200l1 2M19.500 743l2 3.500M22 748l-1-2M23 750.500l-2-3.500" stroke="#5a3a30" stroke-width=".6"/></g>
<!-- vertical ruler line & horizontal ruler line -->

</svg>
<div class="abs" style="left:57px;top:123px;width:2px;height:820px;background:#74797c;z-index:2"></div>
<div class="abs" style="left:57px;top:123px;width:1407px;height:1px;background:#54595c"></div>
<div class="abs" style="left:1498px;top:39px;width:2px;height:961px;background:#fbfafa"></div>
<div class="tog" style="left:1467px;top:113.5px;width:29.5px;height:28px;border-radius:4px"></div>
<div class="tog" style="left:1467px;top:312px;width:29.5px;height:27.500px;border-radius:4px"></div>
<div class="tog" style="left:1467px;top:341.300px;width:29.5px;height:27.200px;border-radius:4px"></div>
<div class="tog" style="left:1467px;top:399.300px;width:29.5px;height:27.700px;border-radius:4px"></div>
<div class="tog" style="left:1467px;top:458px;width:29.5px;height:27.500px;border-radius:4px"></div>
<div class="tog" style="left:1467px;top:656px;width:29.5px;height:27.600px;border-radius:4px"></div>
<div class="tog" style="left:1467px;top:685.400px;width:29.5px;height:27.600px;border-radius:4px"></div>
<div class="sep" style="left:1467px;top:147.500px;width:29.5px;height:1px"></div>
<div class="sep" style="left:1467px;top:305.500px;width:29.5px;height:1px"></div>
<div class="sep" style="left:1467px;top:491.500px;width:29.5px;height:1px"></div>
<div class="sep" style="left:1467px;top:620px;width:29.5px;height:1px"></div>
<svg class="abs" style="left:1460px;top:100px" width="40" height="640" viewBox="1460 100 40 640">
<defs>
<g id="snapnode"><path d="M-2.800 -3.200l6.800 6.800" stroke="#111" stroke-width="1.100"/><path d="M4.800 4.400l-3.600-.8l2.800-2.800z" fill="#111"/><path d="M-4 -6.500l2.500 2.500l-2.500 2.500l-2.500-2.500z" fill="#9a9aff" stroke="#2222ff" stroke-width="1"/><path d="M4 2l2.500 2.500l-2.500 2.500l-2.500-2.500z" fill="#7cc07c" stroke="#1e7a2a" stroke-width="1"/></g>
<linearGradient id="rpage" x1="0" y1="0" x2="1" y2="1"><stop offset="0" stop-color="#fff"/><stop offset=".5" stop-color="#f4f4f4"/><stop offset="1" stop-color="#9a9a9a"/></linearGradient>
</defs>
<use href="#snapnode" x="1481.500" y="127.500"/>
<use href="#snapnode" x="1481.500" y="168.300"/>
<!-- faded bbox icons -->
<g stroke="#d3e4d6" stroke-width="1" fill="none" stroke-dasharray="1.200 .8"><path d="M1475 201.500h11M1486 190.500v11"/><path d="M1475 230.500h11M1486 219.500v11"/><path d="M1475 259.500h11M1486 248.500v11"/><path d="M1475 288.500h11M1486 277.500v11"/></g>
<g fill="#d3e4d6"><circle cx="1486" cy="230.500" r="1.800"/><circle cx="1486" cy="252.500" r="1.800"/><circle cx="1478" cy="282" r="1.500"/></g>
<use href="#snapnode" x="1481.500" y="325.800"/>
<!-- snap to path -->
<path d="M1476 349.500q7 .5 9 7.500M1488 354.500l-3.300 5.500l-3.500-3.200" fill="none" stroke="#1e8a22" stroke-width="1.500" stroke-linejoin="round"/>
<!-- intersection -->
<g><path d="M1475.500 389.500l12.500-10.500M1477 390l9-12" stroke="#555" stroke-width=".9"/><circle cx="1481.500" cy="384" r="1.700" fill="#2a8a2a" stroke="#0e4a12" stroke-width=".6"/></g>
<!-- cusp nodes -->
<g><path d="M1475.500 407.500q8 1 9.500 9q2-1 2.500-3.500" fill="none" stroke="#666" stroke-width="1"/><path d="M1481.500 414.500l2.500 2.500l-2.500 2.500l-2.500-2.500z" fill="#b8e0b8" stroke="#1e7a2a" stroke-width="1"/></g>
<!-- smooth nodes -->
<g><path d="M1475.500 436.500q5 0 6 2q1.500 6 0 8q4 0 6-5" fill="none" stroke="#555" stroke-width="1"/><rect x="1479.500" y="436.500" width="3.600" height="3.600" fill="#b8e0b8" stroke="#1e7a2a" stroke-width="1"/></g>
<!-- midpoints -->
<g><path d="M1475.500 477.500l12.500-12" stroke="#777" stroke-width=".9"/><path d="M1476.500 472.500l3.500 5M1478.500 471l3 4.500M1483 467l3 4.500M1485 465.500l3 4.500" stroke="#d8202c" stroke-width="1.100"/><circle cx="1481.700" cy="471.500" r="1.700" fill="#2a8a2a" stroke="#0e4a12" stroke-width=".6"/></g>
<use href="#snapnode" x="1481.500" y="512.300"/>
<!-- faded others -->
<g stroke="#d8dcd8" stroke-width="1" fill="none"><path d="M1475.500 547.500h11v-8"/><path d="M1475.500 576.500h11v-11" stroke-dasharray="1.200 .8"/><path d="M1476 569.500h5M1478.500 567v5"/></g>
<circle cx="1479" cy="539.500" r="1.500" fill="#d3e4d6"/>
<text x="1482.500" y="604.500" font-family="Liberation Sans, sans-serif" font-weight="bold" font-size="13.500" text-anchor="middle" fill="#d0d2d0">A</text>
<path d="M1475.500 604.500l4-3.500" stroke="#cfe6d2" stroke-width="1.800"/>
<!-- page -->
<rect x="1477.500" y="634.800" width="9" height="12.400" rx=".8" fill="url(#rpage)" stroke="#2e3436" stroke-width="1.100"/>
<!-- grid -->
<g stroke="#1818ff" stroke-width="1.300"><path d="M1477.500 663.500v13.500M1481 663.500v13.500M1484.500 663.500v13.500M1488 663.500v13.500M1475.500 665.500h13.500M1475.500 669h13.500M1475.500 672.500h13.500M1475.500 676h13.500"/></g>
<!-- guides -->
<g stroke="#2a2aff" stroke-width="1.300"><path d="M1476.500 692v14M1487.500 692v14M1484.500 692l-4.500 14"/></g>
</svg>
<div id="canvas" class="abs"></div>
<svg class="abs" style="left:58px;top:124px" width="1406" height="819" viewBox="58 124 1406 819"><g fill="none" stroke="#111" stroke-width=".5" stroke-linecap="round"><path d="M737.9 125.500V148M739.300 125.500V148" stroke="#444" stroke-width=".45"/><path d="M737.200 148L736.300 316M740.300 148L740.600 316M737 173h3.500M737 176h3.500"/><path d="M737.300 156Q726 183 736.300 206" stroke="#000" stroke-width="1.300"/><path d="M737.300 156Q728.500 183 736.800 206" stroke="#000" stroke-width=".5"/><path d="M748 223.500L820.500 162M750 229L822.500 163.800M820.500 162l2 1.800"/><path d="M750.500 232.500L816.500 168.300" /><path d="M742 176.500L816 167M742 176.500L798 182M742.500 185L798 182M747 197L773 202M747 198.200L773 203.200M742 176.500l-1.500 3M742.500 185l2.500 1v70"/><path d="M728.100 178.400L640.600 291.800"/><path d="M733 198L651.800 294.600M733.800 198.600L652.800 295.200" stroke-width=".55"/><path d="M735 202L658.8 295.5"/><path d="M735 202L665 296.2"/><path d="M735 202L670.7 297.0"/><path d="M735 202L676.3 297.7"/><path d="M735 202L681.2 298.3"/><path d="M735.300 203L685.400 298.800M651.800 294.600L685.400 298.800"/><path d="M735.800 209.200L692.400 301.700" stroke-width="1.200" stroke="#444" stroke-dasharray="1.200 .500"/><path d="M735.200 208.500L691.500 300.500"/><path d="M702.8 279.6L700.8 302.5"/><path d="M708.4 267.6L706.4 302.3"/><path d="M713.3 257.2L711.3 302.2"/><path d="M718.2 246.7L716.2 302.0"/><path d="M723.8 234.8L721.8 301.8"/><path d="M728.0 225.8L726 301.7"/><path d="M733.6 213.9L731.6 301.6"/><path d="M697 305L729 301.500L736 301.500"/><path d="M638.800 290.500L691.500 307.500" stroke="#000" stroke-width="1.100"/><path d="M640 289.500L692 305.800M653 293.500L690 304"/><path d="M638.300 260.500V292M639.200 262V291" stroke="#444"/><path d="M816 168L831 300M817 168L832 300" /><path d="M748.500 300H831.500"/><path d="M811.4 173.3L825.3 300" stroke-width=".6"/><path d="M806.2 178.3L819.6 300" stroke-width=".6"/><path d="M801.1 183.3L813.9 300" stroke-width=".6"/><path d="M795.9 188.3L808.2 300" stroke-width=".6"/><path d="M790.8 193.3L802.5 300" stroke-width=".6"/><path d="M785.6 198.3L796.8 300" stroke-width=".6"/><path d="M780.5 203.3L791.1 300" stroke-width=".6"/><path d="M775.3 208.4L785.4 300" stroke-width=".6"/><path d="M770.2 213.4L779.7 300" stroke-width=".6"/><path d="M765.0 218.4L774.0 300" stroke-width=".6"/><path d="M759.9 223.4L768.3 300" stroke-width=".6"/><path d="M754.7 228.4L762.6 300" stroke-width=".6"/><path d="M749.0 228.2L756.9 300" stroke-width=".6"/><path d="M799 184Q806 194 820 197M773 204Q792 219 823 224M752 229Q780 246 826 250.500M749 252Q790 268 828 271"/><path d="M748 277.300L829 277.800" stroke="#333" stroke-width="1.300"/><path d="M740.800 196L746.500 312M743 205L749.500 312M741.800 200L748 312" stroke="#111" stroke-width=".600"/><path d="M742 200L748 310" stroke="#222" stroke-width="2.400" stroke-dasharray=".500 1.100"/><path d="M742.500 300L756.500 300L757.500 316H742Z" fill="#444" stroke="#111" stroke-width=".600"/><path d="M745 300v16M748.500 300v16M752 300v16M755 300v16" stroke="#000" stroke-width="1.200" stroke-dasharray="2 1"/><path d="M745 316v8M748.500 316v8M752 316v8M755.500 316v8" stroke="#111" stroke-width=".700"/><path d="M748 224L800.500 311M749.500 224L802 311" stroke="#222"/><path d="M810.500 262V318M812 262V318M814.500 262V318M816 262V318M809.500 262h3.500M813.500 262h3.500" /><path d="M811 268L806 312M815 268L820 305"/><path d="M661.900 308.300Q663 316 668 320L685 336L693.500 349.500H862"/><path d="M693 314Q693 336 708 345Q716 348.500 730 348.800"/><path d="M666.300 311.600Q676 319 693.300 316Q694.500 314 693.800 311" stroke="#000" stroke-width="1.300"/><path d="M668 316Q678 323 692 322M670 319Q680 327 692 327" stroke="#000" stroke-width=".800"/><path d="M662 305.500h3v5h-3zM693.500 306v12M696 305.500v12"/><path d="M696 316.500Q740 323 800 318.500Q824 316 826 306L875 299.800" stroke="#000" stroke-width=".800"/><path d="M696 318.500Q740 325 800 320.500Q840 318 863 312"/><path d="M696 310L729 315L760 317H800" /><path d="M693.8 319.0C700.8 322.8 722.0 323.7 752.0 323.5Q815.0 323.5 866.0 318.0" stroke="#333" stroke-width=".42"/><path d="M694.1 321.0C701.1 325.2 722.8 326.1 752.0 325.9Q815.0 325.9 865.7 320.7" stroke="#333" stroke-width=".42"/><path d="M694.6 323.0C701.6 327.5 723.6 328.6 752.0 328.4Q815.0 328.4 865.3 323.4" stroke="#333" stroke-width=".42"/><path d="M695.2 325.0C702.2 329.9 724.4 331.1 752.0 330.9Q815.0 330.9 864.7 326.1" stroke="#333" stroke-width=".42"/><path d="M696.0 327.0C703.0 332.3 725.2 333.5 752.0 333.3Q815.0 333.3 863.9 328.8" stroke="#333" stroke-width=".42"/><path d="M697.0 329.0C704.0 334.7 726.0 335.9 752.0 335.8Q815.0 335.8 863.0 331.5" stroke="#333" stroke-width=".42"/><path d="M698.2 331.0C705.2 337.1 726.8 338.4 752.0 338.2Q815.0 338.2 861.9 334.2" stroke="#333" stroke-width=".42"/><path d="M699.6 333.0C706.6 339.5 727.6 340.8 752.0 340.6Q815.0 340.6 860.7 336.9" stroke="#333" stroke-width=".42"/><path d="M701.2 335.0C708.2 341.8 728.4 343.3 752.0 343.1Q815.0 343.1 859.3 339.6" stroke="#333" stroke-width=".42"/><path d="M702.9 337.0C709.9 344.2 729.2 345.8 752.0 345.6Q815.0 345.6 857.7 342.3" stroke="#333" stroke-width=".42"/><path d="M704.8 339.0C711.8 346.6 730.0 348.2 752.0 348.0Q815.0 348.0 856.0 345.0" stroke="#333" stroke-width=".42"/><g fill="#000" stroke="none"><rect x="705" y="318.300" width="2.400" height="2.200"/><rect x="714.800" y="318.900" width="2.400" height="2.200"/><rect x="724.600" y="319.500" width="2.400" height="2.200"/><rect x="734" y="320" width="2.400" height="2.200"/><circle cx="810.600" cy="319.200" r="1.200"/><circle cx="819.700" cy="319.200" r="1.200"/></g><path d="M721 305v11M723.500 305v11M721 305q1.200-1.500 2.500 0M729.500 303v13M731 303v13M788 302v13M790.500 302v13M788 302q1.200-1.500 2.500 0"/><g transform="translate(779,331.500) rotate(36)"><path d="M-21-4.500Q-24 0-21 4.500L8 10.500Q23 12 23 0Q23-12 8-10.500Z" fill="#fff" stroke="#111" stroke-width=".700"/><path d="M-15-6V6M-9-7V7M-3-8.500V8.500M3-9.500V9.500M9-10.500V10.500M15-10.500V10.500M-22-2H22M-22 2H22M-12-6.500L21-6M-12 6.500L21 6" stroke="#222" stroke-width=".450"/></g><path d="M825.300 305.400L875 299.800" stroke="#000" stroke-width="1.300"/><path d="M826 306v10M875 299.800Q872 312 866 320L861.500 346" stroke="#000" stroke-width=".900"/><path d="M876 300Q874 312 868.500 319" stroke="#000" stroke-width="1.400"/><path d="M844.500 306.500L859.500 305V315.500L844.500 317Z" fill="#222" stroke="#000" stroke-width=".800"/><path d="M847 307.500L857.500 306.500V314L847 315.200Z" fill="#ddd" stroke="none"/><path d="M847 309.500l10.500-1M847 311.500l10.500-1M847 313.500l10.500-1M850 307.200v7.500M853 306.900v7.500M856 306.600v7.500" stroke="#222" stroke-width=".400"/><path d="M829 308h12v8h-12zM833 308v8M837 308v8M861 305v11l8-2M865 305v10M842 318l18-1.500l1.500 3" stroke="#222"/><path d="M863 320V349.500M866.500 320L865 349.500M866 333.500H878.500Q880.600 333.500 880.600 336V347Q880.600 349.500 878.500 349.500H856M866 338.800H880.600M866 344.100H880.600M870.500 333.500V349.500M875.500 333.500V349.500" stroke="#222"/><path d="M876.400 291.400L900.500 236M877.800 292L901.500 237M900.500 236l1 1M874 300l3-9" stroke="#333"/><path d="M885 284.500L894.500 283.700L892 294.500L886.500 296.300Z" fill="#333" stroke="#000" stroke-width=".800"/><path d="M887.500 285v10M890 284.800v9.500M892 284.500v8M885.500 288h8M886 291.500h7" stroke="#ddd" stroke-width=".400"/></g><defs><clipPath id="pclip"><rect x="596" y="369.500" width="289" height="270.100"/></clipPath><filter id="pblur" x="-2%" y="-2%" width="104%" height="104%"><feGaussianBlur stdDeviation=".55"/></filter><filter id="pblur1" x="-5%" y="-5%" width="110%" height="110%"><feGaussianBlur stdDeviation=".9 0"/></filter><filter id="pblur2" x="-10%" y="-30%" width="120%" height="160%"><feGaussianBlur stdDeviation="1.8"/></filter><linearGradient id="pwall" x1="0" y1="0" x2="1" y2="0"><stop offset="0" stop-color="#ddbb72"/><stop offset=".5" stop-color="#dab56a"/><stop offset=".85" stop-color="#d6b26c"/><stop offset="1" stop-color="#d4b274"/></linearGradient><linearGradient id="pwallv" x1="0" y1="369.5" x2="0" y2="639.6" gradientUnits="userSpaceOnUse"><stop offset="0" stop-color="#a06400" stop-opacity="0"/><stop offset=".26" stop-color="#a06400" stop-opacity="0"/><stop offset=".5" stop-color="#a06400" stop-opacity=".1"/><stop offset=".7" stop-color="#9a6000" stop-opacity=".24"/><stop offset=".92" stop-color="#965f00" stop-opacity=".46"/><stop offset="1" stop-color="#965f00" stop-opacity=".5"/></linearGradient><linearGradient id="ptable" x1="651" y1="600" x2="885" y2="640" gradientUnits="userSpaceOnUse"><stop offset="0" stop-color="#a86e10"/><stop offset=".45" stop-color="#a0660c"/><stop offset="1" stop-color="#ac7822"/></linearGradient><linearGradient id="psail" x1="0" y1="0" x2="0" y2="1"><stop offset="0" stop-color="#d4bc98"/><stop offset="1" stop-color="#ccb48e"/></linearGradient><linearGradient id="pmsail" x1="0" y1="0" x2="0" y2="1"><stop offset="0" stop-color="#d8c09c"/><stop offset="1" stop-color="#ceb288"/></linearGradient><pattern id="pgrid" width="4" height="4" patternUnits="userSpaceOnUse" patternTransform="rotate(8)"><path d="M0 0H4M0 0V4" stroke="#a89878" stroke-width=".3" opacity=".55" fill="none"/></pattern></defs><g clip-path="url(#pclip)"><rect x="596" y="369.500" width="289" height="270.100" fill="url(#pwall)"/><g fill="#ece6d4" opacity=".4" filter="url(#pblur1)"><rect x="595" y="369" width="3" height="271"/><rect x="638.700" y="369" width="29.300" height="271"/><path d="M702.500 369H730L727.500 640H700Z"/><path d="M761.300 369H786L779.500 640H754.800Z"/></g><g fill="#ece6d4" opacity=".32" filter="url(#pblur1)"><path d="M813.500 369H836L823.300 640H800.800Z"/><path d="M859.500 369H879.500L867 640H847Z"/></g><rect x="878.500" y="369" width="7" height="271" fill="#d0b48c"/><rect x="883.800" y="369" width="2" height="271" fill="#dcc8a8"/><rect x="596" y="369.500" width="289" height="270.100" fill="url(#pwallv)"/><ellipse cx="657" cy="428" rx="4.500" ry="7.500" fill="#9a8450" opacity=".4" filter="url(#pblur2)" transform="rotate(-30 657 428)"/><ellipse cx="612" cy="560" rx="9" ry="14" fill="#8a8a50" opacity=".1" filter="url(#pblur2)"/><path d="M650.500 601L700 596H885V640H650.500Z" fill="url(#ptable)"/><path d="M650.500 601L673 640H650.500Z" fill="#9c6208"/><path d="M650.500 601.300L700 596.500" stroke="#c08c30" stroke-width="1" fill="none" opacity=".8"/><path d="M790 640L885 626.500V640Z" fill="#b4965f" filter="url(#pblur)"/><ellipse cx="775" cy="602" rx="85" ry="5" fill="#8a5004" opacity=".55" filter="url(#pblur2)"/><path d="M684 544L740 548L815 541L822 552L745 556L690 558Z" fill="#c8982a" opacity=".75" filter="url(#pblur2)"/><g filter="url(#pblur)"><path d="M739 606.500H812Q825 607.500 825 618Q825 632 812 634.500H808V634.800H743V633Q726 630 726 618Q726 608 739 606.500Z" fill="#5c2e0e"/><path d="M739 606.500H812Q825 607.500 825 616Q820 622.500 808 622.500H743Q730 622 726 616Q727 608 739 606.500Z" fill="#55290a"/><rect x="743" y="622.500" width="65" height="12.300" fill="#6c3a14"/><path d="M743 622.500H808" stroke="#3a1a06" stroke-width=".700"/><ellipse cx="775.200" cy="616" rx="22" ry="5.300" fill="#b08c3c"/><ellipse cx="775.200" cy="615.300" rx="21" ry="4.500" fill="#343c34"/><ellipse cx="775" cy="614.500" rx="14" ry="2.200" fill="#4c5a50"/><path d="M744 598.500V614M809.200 598.500V615" stroke="#381a06" stroke-width="4.200"/><path d="M744 603V606M809.200 603V606" stroke="#4c260c" stroke-width="5.400"/><path d="M684 578Q690 590 702 596Q716 599.500 760 600H850Q868 598 875 583L876.500 583.500V601H862L850 600Z" fill="#74808a"/><path d="M684 578Q690 590 702 596Q716 599.500 760 600H850Q866 597 874 584L870 580L700 578Z" fill="#7a7566"/><rect x="862" y="583.500" width="14.500" height="17.500" fill="#6e7f88"/><path d="M668 560Q676 574 690 582Q700 588 720 589.500Q780 592 840 589.500Q862 588 872 580L874 556L822 560Q760 566 700 565Q680 563 668 560Z" fill="#96560c"/><path d="M676 563Q686 568 700 569.500Q760 573 822 565.500L874 559V571.500L822 577Q760 582 700 579.500Q690 578 682 573Z" fill="#aa1428"/><path d="M700 574.500Q760 577.500 822 571.500L872 565.500" stroke="#d88a70" stroke-width="1.600" stroke-dasharray="2.500 2" fill="none" opacity=".6"/><path d="M690 581Q700 584.500 720 585.300Q780 588 840 585Q860 583.500 871 578" stroke="#1e282d" stroke-width="1.100" fill="none"/><path d="M696 585.500Q705 588.300 720 588.800Q780 591 840 588.500Q858 587 868 582.500" stroke="#1e282d" stroke-width="1.500" fill="none"/><path d="M704.500 578v10M722.500 579v10.500M728.500 579v10.500M806 577v11M815 576v11M821 575.500v11M841 573v11M850 572v11" stroke="#c07812" stroke-width="1.500"/><g fill="#140e08" stroke="#c8962c" stroke-width=".800"><circle cx="702.500" cy="571.500" r="1.500"/><circle cx="725" cy="573.500" r="1.500"/><circle cx="746" cy="574.500" r="1.600"/><circle cx="752.500" cy="574.500" r="1.600"/><circle cx="784.500" cy="574.500" r="1.500"/><circle cx="813.500" cy="573" r="1.500"/></g><path d="M690 556Q720 552 744 553L820 551L822 562Q760 569 700 567.500Q692 566 688 562Z" fill="#5a3610"/><path d="M696 556h12v8h-12zM716 552h8v12h-8zM733 550h18v14h-18zM760 553h35v11h-35zM800 550h18v12h-18z" fill="#9a5e14"/><path d="M752 558q20-4 46-1l0 7l-46 1z" fill="#a8701e"/><path d="M760 561h36" stroke="#4a5a60" stroke-width="2.500" stroke-dasharray="5 2"/><path d="M700 560l40 1M745 556l60-2" stroke="#2a1808" stroke-width="1.500"/><path d="M668 558Q676 562 690 563L690 558Q680 556 672 553Z" fill="#8a5814"/><path d="M700 552l20-3l0 4l-20 3zM755 549l40-1l0 3l-40 1z" fill="#c8a040"/><path d="M820.600 539.800L874 538V544.600L829.600 549.400Z" fill="#c4963c"/><path d="M829.600 549.400L874 544.600V562L829.600 563.500Z" fill="#b47814"/><path d="M820.600 539.800L829.600 549.400V563.500L822 562Z" fill="#6a3c0c"/><rect x="836.800" y="553.400" width="3.800" height="5.800" rx="1.500" fill="#0c140e"/><path d="M845.500 552L862 550.500V566L857 571L845.500 566Z" fill="#a06414"/><path d="M846 553.500l4-.5v11l-4 .5zM852 553l9-1v12l-9 1z" fill="#789682"/><path d="M846 553.500l4-.5v11l-4 .5zM852 553l9-1v12l-9 1z" fill="none" stroke="#aa1e28" stroke-width=".900"/><path d="M846 552L862 550.500L860 548L849 549Z" fill="#6e9484"/><path d="M872 536Q878 545 876 560Q874 574 868 582" stroke="#d09a20" stroke-width="2.500" fill="none"/><path d="M875.500 531q2-3 3.500 0v6h-3.500z" fill="#b88420"/><g transform="translate(770,587) rotate(38)"><path d="M-24-6.500Q-27 0-24 6.500Q-4 11 14 12Q26 12 26 0Q26-12 14-12Q-4-11-24-6.500Z" fill="#a86c1a" stroke="#1e1a12" stroke-width="1"/><path d="M-12-9.500V9M2-11.500V11.500M16-12V12" stroke="#1a1c1c" stroke-width="1.400"/><circle cx="-21" cy="0" r="1.600" fill="#0c0c0c"/></g><path d="M617.500 534L684 553.500" stroke="#a86c1e" stroke-width="2.600"/><path d="M617.500 532.500L684 551.500" stroke="#cca048" stroke-width=".800"/><path d="M618.500 536L690 574" stroke="#2e2818" stroke-width=".700"/><path d="M619.800 503.500V536" stroke="#6a4618" stroke-width="1.400"/><path d="M617 532h5v5h-5z" fill="#7a4c18"/><path d="M599 510Q610 507 619.500 505.500V521Q610 523 600.500 525.500Z" fill="#e4dcc2"/><path d="M599.200 512.500Q610 509.500 619.500 508M599.600 516.300Q610 513.300 619.500 511.800M600 520Q610 517 619.500 515.600M600.400 523.700Q610 520.700 619.500 519.300" stroke="#1c8272" stroke-width="1.500" fill="none"/><path d="M612 509.500l2.500 3.500l2.500-4M614.500 513v5" stroke="#c01c2c" stroke-width="1.300" fill="none"/><path d="M719 460.500Q676 497 639.400 534.700L681.200 546.800L718 463Z" fill="url(#psail)"/><path d="M719 460.500Q676 497 639.400 534.700L681.200 546.800L718 463Z" fill="url(#pgrid)"/><path d="M721.300 456.600L731.200 456.600L696 549L681.700 549Z" fill="#c99c2e"/><path d="M726 457L688.500 549" stroke="#5a4418" stroke-width=".600"/><path d="M728.500 457L691.500 549" stroke="#7a6028" stroke-width=".500"/><path d="M731.200 466.500L696 546.800" stroke="#221c12" stroke-width=".900"/><path d="M731.200 466.500L734 466.500L733 500L729.600 550.700L696 546.800Z" fill="url(#psail)"/><path d="M731.200 466.500L734 466.500L733 500L729.600 550.700L696 546.800Z" fill="url(#pgrid)"/><path d="M734 466.500L737.300 466.500L736 552L729.600 550.700L733 500Z" fill="#cfa848"/><path d="M744.200 473L797.500 445.500L810.500 500L812 542Q780 548 742.500 546.500Z" fill="url(#pmsail)"/><path d="M744.200 473L797.500 445.500L810.500 500L812 542Q780 548 742.500 546.500Z" fill="url(#pgrid)"/><path d="M742.500 525.500H812" stroke="#7a8478" stroke-width="1"/><path d="M798 446L811 500L812.500 542" stroke="#5a5a4a" stroke-width=".600" fill="none"/><path d="M741.600 376L741.200 420L740.300 500L738.500 556" stroke="#b4741e" stroke-width="2.600" fill="none"/><path d="M740.300 470L738.800 556" stroke="#4a2c10" stroke-width="1.400" stroke-dasharray="1.500 1.200" fill="none"/><path d="M744.500 476L742.500 556" stroke="#c09848" stroke-width="1.200"/><path d="M726.300 410.300L751.500 417.500L752 461L722 455.800Z" fill="#4b2a16"/><path d="M724.500 409.500L753 417.200" stroke="#b07c2c" stroke-width="1.300"/><path d="M741.500 405L741 466" stroke="#b4741e" stroke-width="2.800"/><path d="M740.200 427.500h3M740.200 436h3M740.200 445h3M740 452h3" stroke="#1e2420" stroke-width="1.400"/><path d="M715 469.500L738 470.200" stroke="#a06420" stroke-width="2.200"/><path d="M742.900 472.700L802.700 440.200" stroke="#aa7222" stroke-width="2.600"/><path d="M802 408L799.500 439" stroke="#b07c2c" stroke-width="1.400"/><path d="M782 416.200Q791 413 800.800 411.600V424.600Q792 426.500 783.900 429.800Z" fill="#ece6d4"/><path d="M782.300 417.800Q791 414.800 800.800 413.300M782.800 421.300Q791 418.300 800.800 416.800M783.200 424.800Q791 421.800 800.800 420.300M783.600 428.300Q791 425.300 800.800 423.800" stroke="#141418" stroke-width="1.600" fill="none"/><path d="M793.500 415l2 3l2-3.300M795.500 418v4" stroke="#c01c2c" stroke-width="1.200" fill="none"/><path d="M720.200 381Q730 380 740.300 378.500V395Q730 396 722 397.500Z" fill="#e6dcc2"/><path d="M726 383l5 5l5-6l-2 8l-3 5l-3-5z" fill="#c8202e"/><circle cx="731" cy="388" r="1.300" fill="#2848b0"/><path d="M853 493L877.600 490.600L870.400 512.200H850Z" fill="#e6dcbc" stroke="#c09030" stroke-width=".900"/><path d="M859 497l5 4l6-6l-2 8l-4 6l-3-6z" fill="#c8202e"/><circle cx="863.500" cy="501.500" r="1.600" fill="#2848b0"/><path d="M878.800 490L866.800 538" stroke="#b07c24" stroke-width="1.500"/><path d="M864.500 536h6v6h-6z" fill="#7a4c18"/><g stroke="#3a3428" stroke-width=".55" fill="none" opacity=".5"><path d="M741 392L621 533.500M740.500 401L628 532M741 420L660 503M745 470L790 552M743 480L770 550M752 420L780 437L800 441M752 430L776 446M741 398L752 417M812 500L832 540M833 512L866 538"/></g><g fill="#3a2a20"><ellipse cx="664.500" cy="493.500" rx="1.600" ry="1"/><ellipse cx="765" cy="436.500" rx="2" ry="1.200"/><ellipse cx="770" cy="437" rx="1.600" ry="1"/><ellipse cx="765" cy="443.500" rx="2" ry="1.200"/><ellipse cx="759.500" cy="458" rx="1.800" ry="1.200"/><ellipse cx="832.500" cy="512.300" rx="1.300" ry="1"/></g><path d="M739 520L735 560M741 520L744 560M742.500 520L750 560" stroke="#3a2c1c" stroke-width=".800"/><path d="M812 525L816 556M810 530L809 556" stroke="#4a3a28" stroke-width=".800"/></g></g><g fill="none" stroke="#111" stroke-width=".6" stroke-linecap="round" stroke-linejoin="round"><path d="M739.800 686V708M742.200 686V708M739.800 686q1.200-1.500 2.400 0"/><circle cx="741" cy="710" r="2.400" fill="#fff"/><path d="M739.300 712.500V889M742.800 712.500V889" stroke-width=".7"/><path d="M740 889V916M743 889V916" stroke-dasharray="2 1.200" stroke-width=".4"/><path d="M701.800 716.600H738.200" stroke-dasharray="4 1 1 1" stroke-width=".9"/><path d="M706 717L694.800 795.500M736.600 717V780" /><path d="M736.600 717V780" stroke-dasharray="3 1 1 1"/><path d="M694.800 795.500Q716 772 737 770" /><path d="M706.700 717L703 786M714.400 717L712 776M721.700 717L720.500 773M729.100 717L728.600 771" stroke-width=".45"/><path d="M687 801H738" stroke-dasharray="5 1.200 1.200 1.200" stroke-width=".8"/><path d="M694.800 795.500l2.500 14" /><path d="M740.300 746.500L641.300 853.500"/><path d="M641.300 853.500L693 870" stroke-dasharray="4 1 1 1" stroke-width=".5"/><path d="M649.1 845.1L647.0 855.3" stroke-width=".45"/><path d="M656.9 836.7L652.8 857.2" stroke-width=".45"/><path d="M664.7 828.2L658.5 859.0" stroke-width=".45"/><path d="M672.5 819.8L664.3 860.8" stroke-width=".45"/><path d="M680.3 811.4L670.0 862.7" stroke-width=".45"/><path d="M688.1 803.0L675.8 864.5" stroke-width=".45"/><path d="M695.9 794.5L681.5 866.3" stroke-width=".45"/><path d="M703.7 786.1L687.3 868.2" stroke-width=".45"/><path d="M737.500 771Q715 820 691.700 877.500M739 772Q717 822 694 878.500" stroke-width=".7"/><path d="M738 772Q716 821 693 878" stroke-dasharray="3 1.500 .8 1.500" stroke-width=".35"/><path d="M700.2 862V881.0" stroke-width=".45"/><path d="M707.5 845V881.8" stroke-width=".45"/><path d="M715 828V882.5" stroke-width=".45"/><path d="M722.3 812V883.2" stroke-width=".45"/><path d="M730.7 794V884.1" stroke-width=".45"/><path d="M697 880.500Q720 886 739 886"/><path d="M626 847L696.300 885.400" stroke-width="2"/><path d="M626.500 846L696.800 884.400" stroke="#fff" stroke-width=".5"/><path d="M628.200 846.500V840q1-2 2 0V847.500" fill="#fff"/><path d="M742.700 791.500L810.900 742M745 791.500L807.600 748.600" stroke-width=".75"/><path d="M743.800 737.600L811 742M741.600 746.400L774.600 750.800L796.600 753M774.600 750.800L784.500 760.700"/><circle cx="774.600" cy="750.800" r="1.100" fill="#fff"/><path d="M745 755.200L768 770.600M746 754.200L769 769.600" stroke-width=".8"/><path d="M744 737l3 1.500l-3 1.500z" fill="#111"/><path d="M738.500 760h5v6h-5zM740 745l3 10" /><path d="M745 791.500V884M807.600 748.600L819.700 857.500L823 879.500M745 884L822 877.300"/><circle cx="823.300" cy="880.300" r="1.100" fill="#fff"/><path d="M801.3 752.9L814.3 878.0" stroke-width=".45"/><path d="M795.1 757.2L807.5 878.6" stroke-width=".45"/><path d="M788.8 761.5L800.6 879.3" stroke-width=".45"/><path d="M782.6 765.8L793.8 880.0" stroke-width=".45"/><path d="M776.3 770.0L787.0 880.6" stroke-width=".45"/><path d="M770.0 774.3L780.3 881.3" stroke-width=".45"/><path d="M763.8 778.6L773.5 882.0" stroke-width=".45"/><path d="M757.5 782.9L766.7 882.7" stroke-width=".45"/><path d="M751.3 787.2L760.0 883.3" stroke-width=".45"/><path d="M745 864L819.700 857" stroke-width="1.100"/><path d="M661.800 880.200q-1.500 2 1 3.500q-2.500 1.500 0 3.500Q680 893 696 911.400M661.800 880.200q3-2 7-1.200l-.8 2.500Q680 884 692 889"/><path d="M664 886Q680 890 690 899L702 911.400"/><path d="M691.700 885.400Q720 893.500 753 893.200M692 888.500Q720 897 754 896.500M693 892Q720 900.500 756 900M694 896Q722 904.500 760 904"/><path d="M796 899.500Q840 894 869 884M794 903Q840 898 866 888M790 906.500Q836 902 860 894M797 896Q830 892 832 883L835 872"/><path d="M745 885.500Q790 886.500 831.800 882.800" stroke-width="1"/><path d="M831.800 882.800l3-2v-3h-2.500l2.800-6L869.200 866.300M835.100 873.500L869.200 868"/><path d="M870.300 889.400V864q1.600-3 3.300 0V889.400Z" fill="#fff"/><path d="M859.300 896L861.500 911.400M865 890L863.500 911.400M869.200 889.400L871.400 911.400" /><path d="M863.700 889V911" stroke-width="1.300"/><path d="M656.600 911.400H876"/><path d="M753.600 896.500Q754 889 768 888.300Q786 888.500 795 896Q799 902 794 907Q786 911 774 909.500Q755 905 753.600 896.500Z" fill="#fff" stroke-width=".8"/><path d="M686.300 886.700V925.700M863.700 919V925.700"/><path d="M686.300 921.700H737M790 921.700H863.700" stroke-width=".7"/><path d="M686.300 921.700l4-1.300v2.600zM863.700 921.700l-4-1.300v2.600z" fill="#111"/></g><text transform="translate(789,924.300) scale(-1,1)" font-family="Liberation Sans, sans-serif" font-style="italic" font-weight="bold" font-size="6.3" fill="#111" textLength="51" lengthAdjust="spacingAndGlyphs">- 62 Fuß A'dam -</text><g fill="#0000ff" shape-rendering="crispEdges"><rect x="636" y="124" width="1" height="819" fill-opacity=".18"/><rect x="637" y="124" width="1" height="819" fill-opacity=".28"/><rect x="689" y="124" width="1" height="819" fill-opacity=".35"/><rect x="690" y="124" width="1" height="819" fill-opacity=".04"/><rect x="863" y="124" width="1" height="819" fill-opacity=".33"/><rect x="864" y="124" width="1" height="819" fill-opacity=".09"/></g><g fill="none" stroke="#ff4040" stroke-opacity=".6" stroke-width=".8"><circle cx="637.100" cy="360" r="1.800"/><circle cx="689.500" cy="492" r="1.800"/><circle cx="863.600" cy="684" r="1.800"/></g></svg><svg class="abs" style="left:0;top:943px" width="1471" height="18" viewBox="0 0 1471 18" shape-rendering="crispEdges"><rect x="0" y="0" width="16" height="18" fill="#fff"/><rect x="16.00" y="0" width="16.13" height="18" fill="#000000"/><rect x="31.83" y="0" width="16.13" height="18" fill="#1a1a1a"/><rect x="47.66" y="0" width="16.13" height="18" fill="#333333"/><rect x="63.49" y="0" width="16.13" height="18" fill="#4d4d4d"/><rect x="79.32" y="0" width="16.13" height="18" fill="#666666"/><rect x="95.15" y="0" width="16.13" height="18" fill="#808080"/><rect x="110.98" y="0" width="16.13" height="18" fill="#999999"/><rect x="126.81" y="0" width="16.13" height="18" fill="#b3b3b3"/><rect x="142.64" y="0" width="16.13" height="18" fill="#cccccc"/><rect x="158.47" y="0" width="16.13" height="18" fill="#e6e6e6"/><rect x="174.30" y="0" width="16.13" height="18" fill="#ececec"/><rect x="190.13" y="0" width="16.13" height="18" fill="#f2f2f2"/><rect x="205.96" y="0" width="16.13" height="18" fill="#f9f9f9"/><rect x="221.79" y="0" width="16.13" height="18" fill="#ffffff"/><rect x="237.62" y="0" width="16.13" height="18" fill="#800000"/><rect x="253.45" y="0" width="16.13" height="18" fill="#ff0000"/><rect x="269.28" y="0" width="16.13" height="18" fill="#808000"/><rect x="285.11" y="0" width="16.13" height="18" fill="#ffff00"/><rect x="300.94" y="0" width="16.13" height="18" fill="#008000"/><rect x="316.77" y="0" width="16.13" height="18" fill="#00ff00"/><rect x="332.60" y="0" width="16.13" height="18" fill="#008080"/><rect x="348.43" y="0" width="16.13" height="18" fill="#00ffff"/><rect x="364.26" y="0" width="16.13" height="18" fill="#000080"/><rect x="380.09" y="0" width="16.13" height="18" fill="#0000ff"/><rect x="395.92" y="0" width="16.13" height="18" fill="#800080"/><rect x="411.75" y="0" width="16.13" height="18" fill="#ff00ff"/><rect x="427.58" y="0" width="16.13" height="18" fill="#2b0000"/><rect x="443.41" y="0" width="16.13" height="18" fill="#550000"/><rect x="459.24" y="0" width="16.13" height="18" fill="#800000"/><rect x="475.07" y="0" width="16.13" height="18" fill="#aa0000"/><rect x="490.90" y="0" width="16.13" height="18" fill="#d40000"/><rect x="506.73" y="0" width="16.13" height="18" fill="#ff0000"/><rect x="522.56" y="0" width="16.13" height="18" fill="#ff2a2a"/><rect x="538.39" y="0" width="16.13" height="18" fill="#ff5555"/><rect x="554.22" y="0" width="16.13" height="18" fill="#ff8080"/><rect x="570.05" y="0" width="16.13" height="18" fill="#ffaaaa"/><rect x="585.88" y="0" width="16.13" height="18" fill="#ffd5d5"/><rect x="601.71" y="0" width="16.13" height="18" fill="#280b0b"/><rect x="617.54" y="0" width="16.13" height="18" fill="#501616"/><rect x="633.37" y="0" width="16.13" height="18" fill="#782121"/><rect x="649.20" y="0" width="16.13" height="18" fill="#a02c2c"/><rect x="665.03" y="0" width="16.13" height="18" fill="#c83737"/><rect x="680.86" y="0" width="16.13" height="18" fill="#d35f5f"/><rect x="696.69" y="0" width="16.13" height="18" fill="#de8787"/><rect x="712.52" y="0" width="16.13" height="18" fill="#e9afaf"/><rect x="728.35" y="0" width="16.13" height="18" fill="#f4d7d7"/><rect x="744.18" y="0" width="16.13" height="18" fill="#241c1c"/><rect x="760.01" y="0" width="16.13" height="18" fill="#483737"/><rect x="775.84" y="0" width="16.13" height="18" fill="#6c5353"/><rect x="791.67" y="0" width="16.13" height="18" fill="#916f6f"/><rect x="807.50" y="0" width="16.13" height="18" fill="#ac9393"/><rect x="823.33" y="0" width="16.13" height="18" fill="#c8b7b7"/><rect x="839.16" y="0" width="16.13" height="18" fill="#e3dbdb"/><rect x="854.99" y="0" width="16.13" height="18" fill="#2b1100"/><rect x="870.82" y="0" width="16.13" height="18" fill="#552200"/><rect x="886.65" y="0" width="16.13" height="18" fill="#803300"/><rect x="902.48" y="0" width="16.13" height="18" fill="#aa4400"/><rect x="918.31" y="0" width="16.13" height="18" fill="#d45500"/><rect x="934.14" y="0" width="16.13" height="18" fill="#ff6600"/><rect x="949.97" y="0" width="16.13" height="18" fill="#ff7f2a"/><rect x="965.80" y="0" width="16.13" height="18" fill="#ff9955"/><rect x="981.63" y="0" width="16.13" height="18" fill="#ffb380"/><rect x="997.46" y="0" width="16.13" height="18" fill="#ffccaa"/><rect x="1013.29" y="0" width="16.13" height="18" fill="#ffe6d5"/><rect x="1029.12" y="0" width="16.13" height="18" fill="#28170b"/><rect x="1044.95" y="0" width="16.13" height="18" fill="#502d16"/><rect x="1060.78" y="0" width="16.13" height="18" fill="#784421"/><rect x="1076.61" y="0" width="16.13" height="18" fill="#a05a2c"/><rect x="1092.44" y="0" width="16.13" height="18" fill="#c87137"/><rect x="1108.27" y="0" width="16.13" height="18" fill="#d38d5f"/><rect x="1124.10" y="0" width="16.13" height="18" fill="#deaa87"/><rect x="1139.93" y="0" width="16.13" height="18" fill="#e9c6af"/><rect x="1155.76" y="0" width="16.13" height="18" fill="#f4e3d7"/><rect x="1171.59" y="0" width="16.13" height="18" fill="#241f1c"/><rect x="1187.42" y="0" width="16.13" height="18" fill="#483e37"/><rect x="1203.25" y="0" width="16.13" height="18" fill="#6c5d53"/><rect x="1219.08" y="0" width="16.13" height="18" fill="#917c6f"/><rect x="1234.91" y="0" width="16.13" height="18" fill="#ac9d93"/><rect x="1250.74" y="0" width="16.13" height="18" fill="#c8beb7"/><rect x="1266.57" y="0" width="16.13" height="18" fill="#e3dedb"/><rect x="1282.40" y="0" width="16.13" height="18" fill="#2b2200"/><rect x="1298.23" y="0" width="16.13" height="18" fill="#554400"/><rect x="1314.06" y="0" width="16.13" height="18" fill="#806600"/><rect x="1329.89" y="0" width="16.13" height="18" fill="#aa8800"/><rect x="1345.72" y="0" width="16.13" height="18" fill="#d4aa00"/><rect x="1361.55" y="0" width="16.13" height="18" fill="#ffcc00"/><rect x="1377.38" y="0" width="16.13" height="18" fill="#ffd42a"/><rect x="1393.21" y="0" width="16.13" height="18" fill="#ffdd55"/><rect x="1409.04" y="0" width="16.13" height="18" fill="#ffe680"/><rect x="1424.87" y="0" width="16.13" height="18" fill="#ffeeaa"/><rect x="1440.70" y="0" width="16.13" height="18" fill="#fff6d5"/><rect x="1456.53" y="0" width="7.77" height="18" fill="#28220b"/><rect x="1464" y="1" width="3" height="17" fill="#e6d58c"/><rect x="1467" y="1" width="3" height="17" fill="#e9dfb2"/><path d="M1 1.500l14 15.500M15 1.500l-14 15.500" stroke="#8b1a1a" stroke-width="1.800" shape-rendering="auto"/></svg><div class="abs" style="left:0;top:961px;width:1470px;height:11px;background:#cfd0cf"></div>
<div class="abs" style="left:2.5px;top:964px;width:354.500px;height:5px;border-radius:2.5px;background:#7e8181"></div>
<svg class="abs" style="left:1478px;top:950px" width="14" height="16" viewBox="1478 950 14 16"><path d="M1487 953.800v8.600l-5.300-4.300z" fill="#2e3436"/></svg>
<!-- status bar -->
<span class="lab" style="left:2px;top:972.7px;font-size:10.2px;letter-spacing:-.2px">Füllung:</span><span class="lab" style="left:41px;top:972.7px;font-size:10.2px;letter-spacing:-.3px">N/V</span>
<span class="lab" style="left:2px;top:986.7px;font-size:10.2px;letter-spacing:-.2px">Kontur:</span><span class="lab" style="left:41px;top:986.7px;font-size:10.2px;letter-spacing:-.3px">N/V</span>
<span class="lab" style="left:60px;top:979.2px;font-size:10.4px">O:</span>
<div class="field" style="left:72.500px;top:971.2px;width:55.500px;height:32px"><b style="left:2.500px;top:7.5px;font-size:10.8px;line-height:13px">100</b><i style="left:26.500px"></i><i style="left:40.500px"></i><b style="left:29.500px;top:7px;font-size:12px;line-height:13px;color:#c9cac9">−</b><b style="left:43.500px;top:7px;font-size:12px;line-height:13px;color:#c9cac9">+</b></div>
<div class="sep" style="left:158px;top:971.2px;height:28px"></div>
<svg class="abs" style="left:160px;top:973.2px" width="60" height="24" viewBox="160 974 60 24">
<g opacity=".55" fill="none" stroke="#b9bbb9" stroke-width="1"><path d="M168 986.500q7-6 14 0q-7 5-14 0z"/><circle cx="175" cy="986" r="2.200"/><path d="M170 981.500l1.500 2M175 980v2.300M180 981.500l-1.500 2M172.300 980.500l.9 2.200M177.700 980.500l-.9 2.200"/></g>
<g opacity=".6"><path d="M202 986v-3q0-3 3-3q2.500 0 3 2" fill="none" stroke="#b9bbb9" stroke-width="1.200"/><rect x="201.500" y="985.500" width="9" height="6.500" rx="1" fill="#f3edc8" stroke="#c9c5a8" stroke-width=".9"/></g>
</svg>
<div class="field" style="left:220.500px;top:971.7px;width:67.500px;height:32px;background:linear-gradient(#f7f6f5,#eeecea);border-color:#cdc7c2"><b style="left:14px;top:8px;font-size:8.3px;line-height:13px;color:#2e3436;font-family:'Liberation Sans',sans-serif;letter-spacing:-.2px">(Wurzel)</b></div>
<svg class="abs" style="left:266px;top:979.2px" width="16" height="12" viewBox="266 980 16 12"><path d="M269.300 984h8.400l-4.200 4.500z" fill="#2e3436"/></svg>
<span class="lab dv" style="left:289px;top:979.5px;font-size:10.01px;letter-spacing:0px">Keine Objekte ausgewählt. Klick, Umschalt+Klick, oder Ziehen um Objekte auszuwählen.</span>
<div class="sep" style="left:1196px;top:971.2px;height:28px"></div>
<span class="lab dv" style="left:1205px;top:972.7px;font-size:10.300px">X:</span><span class="lab dv" style="left:1210px;top:972.7px;width:57.500px;text-align:right;font-size:10.300px">-1035,18</span>
<span class="lab dv" style="left:1205px;top:987.2px;font-size:10.300px">Y:</span><span class="lab dv" style="left:1210px;top:987.2px;width:57.500px;text-align:right;font-size:10.300px">-542,40</span>
<span class="lab dv" style="left:1277px;top:979.7px;font-size:10.300px">Z:</span>
<div class="field" style="left:1294px;top:971.7px;width:82.500px;height:32px;background:#fff"><b style="left:11px;top:7.5px;font-size:10.600px;line-height:13px;color:#2e3436">16%</b><i style="left:45px"></i><i style="left:62.500px"></i><b style="left:49px;top:6.5px;font-size:13px;line-height:13px;color:#2e3436">−</b><b style="left:66px;top:6.5px;font-size:13px;line-height:13px;color:#2e3436">+</b></div>
<span class="lab dv" style="left:1385px;top:979.7px;font-size:10.300px">R:</span>
<div class="field" style="left:1401.4px;top:971.7px;width:89px;height:32px;background:#fff"><b style="left:13.500px;top:7.5px;font-size:10.600px;line-height:13px;color:#2e3436">0,00°</b><i style="left:52px"></i><i style="left:69.500px"></i><b style="left:55.500px;top:6.5px;font-size:13px;line-height:13px;color:#2e3436">−</b><b style="left:73px;top:6.5px;font-size:13px;line-height:13px;color:#2e3436">+</b></div>
</body>
</html>
